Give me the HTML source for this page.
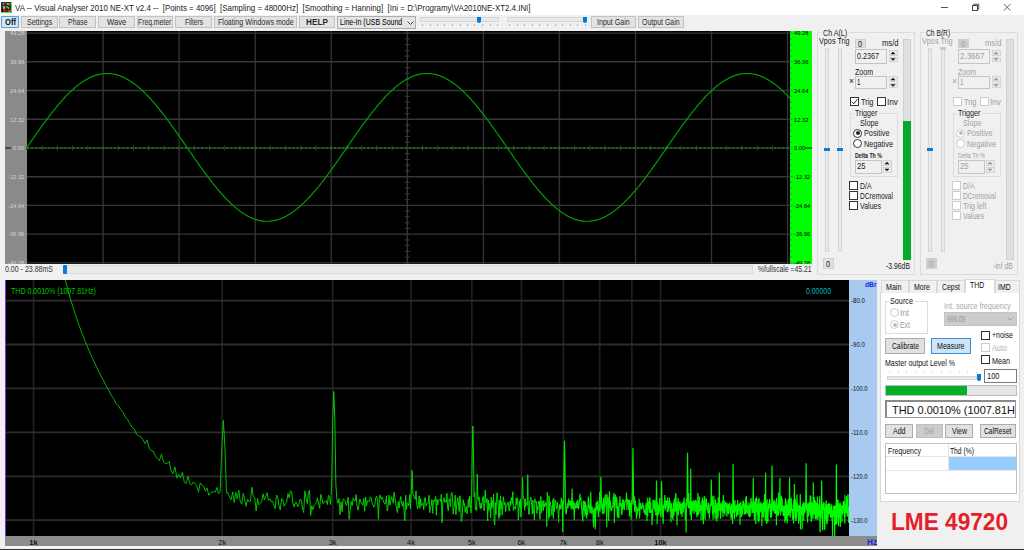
<!DOCTYPE html><html><head><meta charset="utf-8"><style>
html,body{margin:0;padding:0;}
body{width:1024px;height:550px;overflow:hidden;position:relative;background:#f0f0f0;font-family:"Liberation Sans",sans-serif;}
.t{position:absolute;white-space:pre;line-height:1;transform-origin:0 0;}
.r{position:absolute;}
svg{position:absolute;left:0;top:0;}
</style></head><body>
<div class="r" style="left:0px;top:0px;width:1024px;height:15px;background:#fff;"></div>
<div class="t" style="left:14.60px;top:4.00px;font-size:9.3px;color:#222;transform:scaleX(0.8507);">VA -- Visual Analyser 2010 NE-XT v2.4 --  [Points = 4096]  [Sampling = 48000Hz]  [Smoothing = Hanning]  [Ini = D:\Programy\VA2010NE-XT2.4.INI]</div>
<div class="r" style="left:1px;top:2px;width:11px;height:11px;background:#2e2e2e;border-right:1px solid #44ee44;border-bottom:1px solid #44ee44;box-sizing:border-box;"></div>
<div class="r" style="left:1.5px;top:2.5px;width:9.5px;height:0.5px;background:#555;"></div>
<div class="r" style="left:2.5px;top:3px;width:1.5px;height:2px;background:#4aa8b0;border-radius:40%;"></div>
<div class="r" style="left:7px;top:3px;width:1.5px;height:2px;background:#b8b020;border-radius:40%;"></div>
<div class="r" style="left:9px;top:2.5px;width:2px;height:2.0px;background:#e03030;border-radius:50%;"></div>
<div class="r" style="left:3px;top:6px;width:1.5px;height:2.5px;background:#c8c020;border-radius:40%;"></div>
<div class="r" style="left:6.3px;top:5.7px;width:1.5px;height:2.6000000000000005px;background:#40a8b0;border-radius:40%;"></div>
<div class="r" style="left:8px;top:7px;width:1px;height:1.5px;background:#b8b020;"></div>
<div class="r" style="left:1.5px;top:8.5px;width:1.5px;height:3.5px;background:#000;"></div>
<div class="r" style="left:3.3px;top:9.2px;width:2.7px;height:2.6000000000000014px;background:#c01010;border-radius:30%;"></div>
<div class="r" style="left:7.5px;top:10px;width:3.5px;height:2px;background:#e03838;border-radius:50%;"></div>
<svg width="1024" height="16" style="left:0;top:0"><rect x="972.5" y="5.5" width="5" height="5" fill="none" stroke="#444" stroke-width="1"/><path d="M973.8 5.5 V4.2 H978.8 V9.2 H977.5" fill="none" stroke="#444" stroke-width="0.9"/><path d="M1003.8 4 L1010.4 10.6 M1010.4 4 L1003.8 10.6" stroke="#555" stroke-width="0.9"/><path d="M941 7.5 H948" stroke="#555" stroke-width="1"/></svg>
<div class="r" style="left:1px;top:16px;width:18px;height:12px;box-sizing:border-box;background:#d2e6f8;border:1px solid #5a9edc;border-radius:1px;"></div>
<div class="t" style="left:4.50px;top:18.00px;font-size:8.6px;color:#111;font-weight:bold;transform:scaleX(0.8858);">Off</div>
<div class="r" style="left:21px;top:16px;width:37px;height:12px;box-sizing:border-box;background:#e3e3e3;border:1px solid #c2c2c2;"></div>
<div class="t" style="left:26.90px;top:19.00px;font-size:8.2px;color:#2a2a2a;transform:scaleX(0.8505);">Settings</div>
<div class="r" style="left:59px;top:16px;width:37px;height:12px;box-sizing:border-box;background:#e3e3e3;border:1px solid #c2c2c2;"></div>
<div class="t" style="left:67.65px;top:19.00px;font-size:8.2px;color:#2a2a2a;transform:scaleX(0.8473);">Phase</div>
<div class="r" style="left:98px;top:16px;width:37px;height:12px;box-sizing:border-box;background:#e3e3e3;border:1px solid #c2c2c2;"></div>
<div class="t" style="left:106.80px;top:19.00px;font-size:8.2px;color:#2a2a2a;transform:scaleX(0.9392);">Wave</div>
<div class="r" style="left:137px;top:16px;width:36px;height:12px;box-sizing:border-box;background:#e3e3e3;border:1px solid #c2c2c2;"></div>
<div class="t" style="left:138.35px;top:19.00px;font-size:8.2px;color:#2a2a2a;transform:scaleX(0.8304);">Freq.meter</div>
<div class="r" style="left:175px;top:16px;width:37px;height:12px;box-sizing:border-box;background:#e3e3e3;border:1px solid #c2c2c2;"></div>
<div class="t" style="left:184.50px;top:19.00px;font-size:8.2px;color:#2a2a2a;transform:scaleX(0.8064);">Filters</div>
<div class="r" style="left:214px;top:16px;width:83px;height:12px;box-sizing:border-box;background:#e3e3e3;border:1px solid #c2c2c2;"></div>
<div class="t" style="left:217.60px;top:19.00px;font-size:8.2px;color:#2a2a2a;transform:scaleX(0.8662);">Floating Windows mode</div>
<div class="r" style="left:299px;top:16px;width:36px;height:12px;box-sizing:border-box;background:#e3e3e3;border:1px solid #c2c2c2;"></div>
<div class="t" style="left:306.05px;top:19.00px;font-size:8.2px;color:#2a2a2a;font-weight:bold;">HELP</div>
<div class="r" style="left:337px;top:16px;width:79px;height:13px;box-sizing:border-box;background:#e5e5e5;border:1px solid #acacac;"></div>
<div class="t" style="left:339.70px;top:18.00px;font-size:8.6px;color:#000;transform:scaleX(0.8145);">Line-In (USB Sound</div>
<svg width="1024" height="40"><path d="M407.5 21.5 L410.5 24.5 L413.5 21.5" fill="none" stroke="#444" stroke-width="1"/></svg>
<div class="r" style="left:420px;top:17px;width:79px;height:5px;box-sizing:border-box;background:#e7eaea;border:1px solid #d6d6d6;"></div>
<div class="r" style="left:477px;top:17px;width:4px;height:6px;background:#007ad9;border-radius:0 0 2px 2px;"></div>
<div class="r" style="left:422px;top:24px;width:1px;height:2px;background:#b8b8b8;"></div>
<div class="r" style="left:430px;top:24px;width:1px;height:2px;background:#b8b8b8;"></div>
<div class="r" style="left:437px;top:24px;width:1px;height:2px;background:#b8b8b8;"></div>
<div class="r" style="left:444px;top:24px;width:1px;height:2px;background:#b8b8b8;"></div>
<div class="r" style="left:452px;top:24px;width:1px;height:2px;background:#b8b8b8;"></div>
<div class="r" style="left:460px;top:24px;width:1px;height:2px;background:#b8b8b8;"></div>
<div class="r" style="left:467px;top:24px;width:1px;height:2px;background:#b8b8b8;"></div>
<div class="r" style="left:474px;top:24px;width:1px;height:2px;background:#b8b8b8;"></div>
<div class="r" style="left:482px;top:24px;width:1px;height:2px;background:#b8b8b8;"></div>
<div class="r" style="left:490px;top:24px;width:1px;height:2px;background:#b8b8b8;"></div>
<div class="r" style="left:497px;top:24px;width:1px;height:2px;background:#b8b8b8;"></div>
<div class="r" style="left:507px;top:17px;width:80px;height:5px;box-sizing:border-box;background:#e7eaea;border:1px solid #d6d6d6;"></div>
<div class="r" style="left:583px;top:17px;width:4px;height:6px;background:#007ad9;border-radius:0 0 2px 2px;"></div>
<div class="r" style="left:509px;top:24px;width:1px;height:2px;background:#b8b8b8;"></div>
<div class="r" style="left:517px;top:24px;width:1px;height:2px;background:#b8b8b8;"></div>
<div class="r" style="left:524px;top:24px;width:1px;height:2px;background:#b8b8b8;"></div>
<div class="r" style="left:532px;top:24px;width:1px;height:2px;background:#b8b8b8;"></div>
<div class="r" style="left:539px;top:24px;width:1px;height:2px;background:#b8b8b8;"></div>
<div class="r" style="left:547px;top:24px;width:1px;height:2px;background:#b8b8b8;"></div>
<div class="r" style="left:555px;top:24px;width:1px;height:2px;background:#b8b8b8;"></div>
<div class="r" style="left:562px;top:24px;width:1px;height:2px;background:#b8b8b8;"></div>
<div class="r" style="left:570px;top:24px;width:1px;height:2px;background:#b8b8b8;"></div>
<div class="r" style="left:577px;top:24px;width:1px;height:2px;background:#b8b8b8;"></div>
<div class="r" style="left:585px;top:24px;width:1px;height:2px;background:#b8b8b8;"></div>
<div class="r" style="left:591px;top:16px;width:45px;height:12px;box-sizing:border-box;background:#e3e3e3;border:1px solid #c2c2c2;"></div>
<div class="t" style="left:597.10px;top:19.00px;font-size:8.2px;color:#2a2a2a;transform:scaleX(0.8669);">Input Gain</div>
<div class="r" style="left:638px;top:16px;width:46px;height:12px;box-sizing:border-box;background:#e3e3e3;border:1px solid #c2c2c2;"></div>
<div class="t" style="left:642.15px;top:19.00px;font-size:8.2px;color:#2a2a2a;transform:scaleX(0.8526);">Output Gain</div>
<div class="r" style="left:5px;top:31px;width:22px;height:233px;background:#8a8a8a;"></div>
<div class="r" style="left:27px;top:31px;width:763px;height:233px;background:#000;"></div>
<div class="r" style="left:790px;top:31px;width:22px;height:233px;background:#00ff00;"></div>
<svg width="1024" height="550" style="clip-path:inset(31px 212px 286px 5px)"><line x1="103.1" y1="31" x2="103.1" y2="264" stroke="#333" stroke-width="1.4"/><line x1="179.1" y1="31" x2="179.1" y2="264" stroke="#333" stroke-width="1.4"/><line x1="255.2" y1="31" x2="255.2" y2="264" stroke="#333" stroke-width="1.4"/><line x1="331.2" y1="31" x2="331.2" y2="264" stroke="#333" stroke-width="1.4"/><line x1="407.3" y1="31" x2="407.3" y2="264" stroke="#333" stroke-width="1.4"/><line x1="483.4" y1="31" x2="483.4" y2="264" stroke="#333" stroke-width="1.4"/><line x1="559.4" y1="31" x2="559.4" y2="264" stroke="#333" stroke-width="1.4"/><line x1="635.5" y1="31" x2="635.5" y2="264" stroke="#333" stroke-width="1.4"/><line x1="711.5" y1="31" x2="711.5" y2="264" stroke="#333" stroke-width="1.4"/><line x1="787.6" y1="31" x2="787.6" y2="264" stroke="#333" stroke-width="1.4"/><line x1="27" y1="33.1" x2="790" y2="33.1" stroke="#373737" stroke-width="1.4"/><line x1="27" y1="61.8" x2="790" y2="61.8" stroke="#373737" stroke-width="1.4"/><line x1="27" y1="90.5" x2="790" y2="90.5" stroke="#373737" stroke-width="1.4"/><line x1="27" y1="119.3" x2="790" y2="119.3" stroke="#373737" stroke-width="1.4"/><line x1="27" y1="148.0" x2="790" y2="148.0" stroke="#373737" stroke-width="1.4"/><line x1="27" y1="176.7" x2="790" y2="176.7" stroke="#373737" stroke-width="1.4"/><line x1="27" y1="205.4" x2="790" y2="205.4" stroke="#373737" stroke-width="1.4"/><line x1="27" y1="234.1" x2="790" y2="234.1" stroke="#373737" stroke-width="1.4"/><line x1="27" y1="262.9" x2="790" y2="262.9" stroke="#373737" stroke-width="1.4"/><line x1="27.0" y1="145.5" x2="27.0" y2="150.5" stroke="#3a3a3a" stroke-width="1"/><line x1="42.2" y1="145.5" x2="42.2" y2="150.5" stroke="#3a3a3a" stroke-width="1"/><line x1="57.4" y1="145.5" x2="57.4" y2="150.5" stroke="#3a3a3a" stroke-width="1"/><line x1="72.6" y1="145.5" x2="72.6" y2="150.5" stroke="#3a3a3a" stroke-width="1"/><line x1="87.8" y1="145.5" x2="87.8" y2="150.5" stroke="#3a3a3a" stroke-width="1"/><line x1="103.1" y1="145.5" x2="103.1" y2="150.5" stroke="#3a3a3a" stroke-width="1"/><line x1="118.3" y1="145.5" x2="118.3" y2="150.5" stroke="#3a3a3a" stroke-width="1"/><line x1="133.5" y1="145.5" x2="133.5" y2="150.5" stroke="#3a3a3a" stroke-width="1"/><line x1="148.7" y1="145.5" x2="148.7" y2="150.5" stroke="#3a3a3a" stroke-width="1"/><line x1="163.9" y1="145.5" x2="163.9" y2="150.5" stroke="#3a3a3a" stroke-width="1"/><line x1="179.1" y1="145.5" x2="179.1" y2="150.5" stroke="#3a3a3a" stroke-width="1"/><line x1="194.3" y1="145.5" x2="194.3" y2="150.5" stroke="#3a3a3a" stroke-width="1"/><line x1="209.5" y1="145.5" x2="209.5" y2="150.5" stroke="#3a3a3a" stroke-width="1"/><line x1="224.8" y1="145.5" x2="224.8" y2="150.5" stroke="#3a3a3a" stroke-width="1"/><line x1="240.0" y1="145.5" x2="240.0" y2="150.5" stroke="#3a3a3a" stroke-width="1"/><line x1="255.2" y1="145.5" x2="255.2" y2="150.5" stroke="#3a3a3a" stroke-width="1"/><line x1="270.4" y1="145.5" x2="270.4" y2="150.5" stroke="#3a3a3a" stroke-width="1"/><line x1="285.6" y1="145.5" x2="285.6" y2="150.5" stroke="#3a3a3a" stroke-width="1"/><line x1="300.8" y1="145.5" x2="300.8" y2="150.5" stroke="#3a3a3a" stroke-width="1"/><line x1="316.0" y1="145.5" x2="316.0" y2="150.5" stroke="#3a3a3a" stroke-width="1"/><line x1="331.2" y1="145.5" x2="331.2" y2="150.5" stroke="#3a3a3a" stroke-width="1"/><line x1="346.5" y1="145.5" x2="346.5" y2="150.5" stroke="#3a3a3a" stroke-width="1"/><line x1="361.7" y1="145.5" x2="361.7" y2="150.5" stroke="#3a3a3a" stroke-width="1"/><line x1="376.9" y1="145.5" x2="376.9" y2="150.5" stroke="#3a3a3a" stroke-width="1"/><line x1="392.1" y1="145.5" x2="392.1" y2="150.5" stroke="#3a3a3a" stroke-width="1"/><line x1="407.3" y1="145.5" x2="407.3" y2="150.5" stroke="#3a3a3a" stroke-width="1"/><line x1="422.5" y1="145.5" x2="422.5" y2="150.5" stroke="#3a3a3a" stroke-width="1"/><line x1="437.7" y1="145.5" x2="437.7" y2="150.5" stroke="#3a3a3a" stroke-width="1"/><line x1="452.9" y1="145.5" x2="452.9" y2="150.5" stroke="#3a3a3a" stroke-width="1"/><line x1="468.1" y1="145.5" x2="468.1" y2="150.5" stroke="#3a3a3a" stroke-width="1"/><line x1="483.4" y1="145.5" x2="483.4" y2="150.5" stroke="#3a3a3a" stroke-width="1"/><line x1="498.6" y1="145.5" x2="498.6" y2="150.5" stroke="#3a3a3a" stroke-width="1"/><line x1="513.8" y1="145.5" x2="513.8" y2="150.5" stroke="#3a3a3a" stroke-width="1"/><line x1="529.0" y1="145.5" x2="529.0" y2="150.5" stroke="#3a3a3a" stroke-width="1"/><line x1="544.2" y1="145.5" x2="544.2" y2="150.5" stroke="#3a3a3a" stroke-width="1"/><line x1="559.4" y1="145.5" x2="559.4" y2="150.5" stroke="#3a3a3a" stroke-width="1"/><line x1="574.6" y1="145.5" x2="574.6" y2="150.5" stroke="#3a3a3a" stroke-width="1"/><line x1="589.8" y1="145.5" x2="589.8" y2="150.5" stroke="#3a3a3a" stroke-width="1"/><line x1="605.1" y1="145.5" x2="605.1" y2="150.5" stroke="#3a3a3a" stroke-width="1"/><line x1="620.3" y1="145.5" x2="620.3" y2="150.5" stroke="#3a3a3a" stroke-width="1"/><line x1="635.5" y1="145.5" x2="635.5" y2="150.5" stroke="#3a3a3a" stroke-width="1"/><line x1="650.7" y1="145.5" x2="650.7" y2="150.5" stroke="#3a3a3a" stroke-width="1"/><line x1="665.9" y1="145.5" x2="665.9" y2="150.5" stroke="#3a3a3a" stroke-width="1"/><line x1="681.1" y1="145.5" x2="681.1" y2="150.5" stroke="#3a3a3a" stroke-width="1"/><line x1="696.3" y1="145.5" x2="696.3" y2="150.5" stroke="#3a3a3a" stroke-width="1"/><line x1="711.5" y1="145.5" x2="711.5" y2="150.5" stroke="#3a3a3a" stroke-width="1"/><line x1="726.8" y1="145.5" x2="726.8" y2="150.5" stroke="#3a3a3a" stroke-width="1"/><line x1="742.0" y1="145.5" x2="742.0" y2="150.5" stroke="#3a3a3a" stroke-width="1"/><line x1="757.2" y1="145.5" x2="757.2" y2="150.5" stroke="#3a3a3a" stroke-width="1"/><line x1="772.4" y1="145.5" x2="772.4" y2="150.5" stroke="#3a3a3a" stroke-width="1"/><line x1="787.6" y1="145.5" x2="787.6" y2="150.5" stroke="#3a3a3a" stroke-width="1"/><line x1="404.8" y1="33.1" x2="409.8" y2="33.1" stroke="#3a3a3a" stroke-width="1"/><line x1="404.8" y1="38.8" x2="409.8" y2="38.8" stroke="#3a3a3a" stroke-width="1"/><line x1="404.8" y1="44.6" x2="409.8" y2="44.6" stroke="#3a3a3a" stroke-width="1"/><line x1="404.8" y1="50.3" x2="409.8" y2="50.3" stroke="#3a3a3a" stroke-width="1"/><line x1="404.8" y1="56.1" x2="409.8" y2="56.1" stroke="#3a3a3a" stroke-width="1"/><line x1="404.8" y1="61.8" x2="409.8" y2="61.8" stroke="#3a3a3a" stroke-width="1"/><line x1="404.8" y1="67.6" x2="409.8" y2="67.6" stroke="#3a3a3a" stroke-width="1"/><line x1="404.8" y1="73.3" x2="409.8" y2="73.3" stroke="#3a3a3a" stroke-width="1"/><line x1="404.8" y1="79.1" x2="409.8" y2="79.1" stroke="#3a3a3a" stroke-width="1"/><line x1="404.8" y1="84.8" x2="409.8" y2="84.8" stroke="#3a3a3a" stroke-width="1"/><line x1="404.8" y1="90.5" x2="409.8" y2="90.5" stroke="#3a3a3a" stroke-width="1"/><line x1="404.8" y1="96.3" x2="409.8" y2="96.3" stroke="#3a3a3a" stroke-width="1"/><line x1="404.8" y1="102.0" x2="409.8" y2="102.0" stroke="#3a3a3a" stroke-width="1"/><line x1="404.8" y1="107.8" x2="409.8" y2="107.8" stroke="#3a3a3a" stroke-width="1"/><line x1="404.8" y1="113.5" x2="409.8" y2="113.5" stroke="#3a3a3a" stroke-width="1"/><line x1="404.8" y1="119.3" x2="409.8" y2="119.3" stroke="#3a3a3a" stroke-width="1"/><line x1="404.8" y1="125.0" x2="409.8" y2="125.0" stroke="#3a3a3a" stroke-width="1"/><line x1="404.8" y1="130.7" x2="409.8" y2="130.7" stroke="#3a3a3a" stroke-width="1"/><line x1="404.8" y1="136.5" x2="409.8" y2="136.5" stroke="#3a3a3a" stroke-width="1"/><line x1="404.8" y1="142.2" x2="409.8" y2="142.2" stroke="#3a3a3a" stroke-width="1"/><line x1="404.8" y1="148.0" x2="409.8" y2="148.0" stroke="#3a3a3a" stroke-width="1"/><line x1="404.8" y1="153.7" x2="409.8" y2="153.7" stroke="#3a3a3a" stroke-width="1"/><line x1="404.8" y1="159.5" x2="409.8" y2="159.5" stroke="#3a3a3a" stroke-width="1"/><line x1="404.8" y1="165.2" x2="409.8" y2="165.2" stroke="#3a3a3a" stroke-width="1"/><line x1="404.8" y1="171.0" x2="409.8" y2="171.0" stroke="#3a3a3a" stroke-width="1"/><line x1="404.8" y1="176.7" x2="409.8" y2="176.7" stroke="#3a3a3a" stroke-width="1"/><line x1="404.8" y1="182.4" x2="409.8" y2="182.4" stroke="#3a3a3a" stroke-width="1"/><line x1="404.8" y1="188.2" x2="409.8" y2="188.2" stroke="#3a3a3a" stroke-width="1"/><line x1="404.8" y1="193.9" x2="409.8" y2="193.9" stroke="#3a3a3a" stroke-width="1"/><line x1="404.8" y1="199.7" x2="409.8" y2="199.7" stroke="#3a3a3a" stroke-width="1"/><line x1="404.8" y1="205.4" x2="409.8" y2="205.4" stroke="#3a3a3a" stroke-width="1"/><line x1="404.8" y1="211.2" x2="409.8" y2="211.2" stroke="#3a3a3a" stroke-width="1"/><line x1="404.8" y1="216.9" x2="409.8" y2="216.9" stroke="#3a3a3a" stroke-width="1"/><line x1="404.8" y1="222.7" x2="409.8" y2="222.7" stroke="#3a3a3a" stroke-width="1"/><line x1="404.8" y1="228.4" x2="409.8" y2="228.4" stroke="#3a3a3a" stroke-width="1"/><line x1="404.8" y1="234.1" x2="409.8" y2="234.1" stroke="#3a3a3a" stroke-width="1"/><line x1="404.8" y1="239.9" x2="409.8" y2="239.9" stroke="#3a3a3a" stroke-width="1"/><line x1="404.8" y1="245.6" x2="409.8" y2="245.6" stroke="#3a3a3a" stroke-width="1"/><line x1="404.8" y1="251.4" x2="409.8" y2="251.4" stroke="#3a3a3a" stroke-width="1"/><line x1="404.8" y1="257.1" x2="409.8" y2="257.1" stroke="#3a3a3a" stroke-width="1"/><line x1="404.8" y1="262.9" x2="409.8" y2="262.9" stroke="#3a3a3a" stroke-width="1"/><line x1="27" y1="148.0" x2="790" y2="148.0" stroke="#00b000" stroke-width="1.0" stroke-dasharray="2 2.15"/><line x1="790" y1="33.1" x2="793" y2="33.1" stroke="#30a030" stroke-width="1"/><line x1="790" y1="38.8" x2="792" y2="38.8" stroke="#30a030" stroke-width="1"/><line x1="790" y1="44.6" x2="792" y2="44.6" stroke="#30a030" stroke-width="1"/><line x1="790" y1="50.3" x2="792" y2="50.3" stroke="#30a030" stroke-width="1"/><line x1="790" y1="56.1" x2="792" y2="56.1" stroke="#30a030" stroke-width="1"/><line x1="790" y1="61.8" x2="793" y2="61.8" stroke="#30a030" stroke-width="1"/><line x1="790" y1="67.6" x2="792" y2="67.6" stroke="#30a030" stroke-width="1"/><line x1="790" y1="73.3" x2="792" y2="73.3" stroke="#30a030" stroke-width="1"/><line x1="790" y1="79.1" x2="792" y2="79.1" stroke="#30a030" stroke-width="1"/><line x1="790" y1="84.8" x2="792" y2="84.8" stroke="#30a030" stroke-width="1"/><line x1="790" y1="90.5" x2="793" y2="90.5" stroke="#30a030" stroke-width="1"/><line x1="790" y1="96.3" x2="792" y2="96.3" stroke="#30a030" stroke-width="1"/><line x1="790" y1="102.0" x2="792" y2="102.0" stroke="#30a030" stroke-width="1"/><line x1="790" y1="107.8" x2="792" y2="107.8" stroke="#30a030" stroke-width="1"/><line x1="790" y1="113.5" x2="792" y2="113.5" stroke="#30a030" stroke-width="1"/><line x1="790" y1="119.3" x2="793" y2="119.3" stroke="#30a030" stroke-width="1"/><line x1="790" y1="125.0" x2="792" y2="125.0" stroke="#30a030" stroke-width="1"/><line x1="790" y1="130.7" x2="792" y2="130.7" stroke="#30a030" stroke-width="1"/><line x1="790" y1="136.5" x2="792" y2="136.5" stroke="#30a030" stroke-width="1"/><line x1="790" y1="142.2" x2="792" y2="142.2" stroke="#30a030" stroke-width="1"/><line x1="790" y1="148.0" x2="793" y2="148.0" stroke="#30a030" stroke-width="1"/><line x1="790" y1="153.7" x2="792" y2="153.7" stroke="#30a030" stroke-width="1"/><line x1="790" y1="159.5" x2="792" y2="159.5" stroke="#30a030" stroke-width="1"/><line x1="790" y1="165.2" x2="792" y2="165.2" stroke="#30a030" stroke-width="1"/><line x1="790" y1="171.0" x2="792" y2="171.0" stroke="#30a030" stroke-width="1"/><line x1="790" y1="176.7" x2="793" y2="176.7" stroke="#30a030" stroke-width="1"/><line x1="790" y1="182.4" x2="792" y2="182.4" stroke="#30a030" stroke-width="1"/><line x1="790" y1="188.2" x2="792" y2="188.2" stroke="#30a030" stroke-width="1"/><line x1="790" y1="193.9" x2="792" y2="193.9" stroke="#30a030" stroke-width="1"/><line x1="790" y1="199.7" x2="792" y2="199.7" stroke="#30a030" stroke-width="1"/><line x1="790" y1="205.4" x2="793" y2="205.4" stroke="#30a030" stroke-width="1"/><line x1="790" y1="211.2" x2="792" y2="211.2" stroke="#30a030" stroke-width="1"/><line x1="790" y1="216.9" x2="792" y2="216.9" stroke="#30a030" stroke-width="1"/><line x1="790" y1="222.7" x2="792" y2="222.7" stroke="#30a030" stroke-width="1"/><line x1="790" y1="228.4" x2="792" y2="228.4" stroke="#30a030" stroke-width="1"/><line x1="790" y1="234.1" x2="793" y2="234.1" stroke="#30a030" stroke-width="1"/><line x1="790" y1="239.9" x2="792" y2="239.9" stroke="#30a030" stroke-width="1"/><line x1="790" y1="245.6" x2="792" y2="245.6" stroke="#30a030" stroke-width="1"/><line x1="790" y1="251.4" x2="792" y2="251.4" stroke="#30a030" stroke-width="1"/><line x1="790" y1="257.1" x2="792" y2="257.1" stroke="#30a030" stroke-width="1"/><line x1="790" y1="262.9" x2="793" y2="262.9" stroke="#30a030" stroke-width="1"/><line x1="5" y1="148.0" x2="11" y2="148.0" stroke="#111" stroke-width="1"/><line x1="805" y1="148.0" x2="812" y2="148.0" stroke="#111" stroke-width="1"/><polyline points="27.0,147.40 28.0,145.95 29.0,144.50 30.0,143.05 31.0,141.60 32.0,140.16 33.0,138.71 34.0,137.27 35.0,135.84 36.0,134.41 37.0,132.98 38.0,131.56 39.0,130.15 40.0,128.74 41.0,127.34 42.0,125.95 43.0,124.56 44.0,123.19 45.0,121.82 46.0,120.47 47.0,119.12 48.0,117.78 49.0,116.46 50.0,115.15 51.0,113.85 52.0,112.56 53.0,111.29 54.0,110.03 55.0,108.79 56.0,107.56 57.0,106.34 58.0,105.14 59.0,103.96 60.0,102.80 61.0,101.65 62.0,100.52 63.0,99.41 64.0,98.31 65.0,97.24 66.0,96.18 67.0,95.14 68.0,94.13 69.0,93.13 70.0,92.16 71.0,91.21 72.0,90.27 73.0,89.37 74.0,88.48 75.0,87.61 76.0,86.77 77.0,85.95 78.0,85.16 79.0,84.39 80.0,83.64 81.0,82.92 82.0,82.23 83.0,81.55 84.0,80.91 85.0,80.29 86.0,79.69 87.0,79.13 88.0,78.58 89.0,78.07 90.0,77.58 91.0,77.12 92.0,76.68 93.0,76.27 94.0,75.89 95.0,75.54 96.0,75.22 97.0,74.92 98.0,74.65 99.0,74.41 100.0,74.20 101.0,74.01 102.0,73.86 103.0,73.73 104.0,73.63 105.0,73.56 106.0,73.51 107.0,73.50 108.0,73.51 109.0,73.56 110.0,73.63 111.0,73.73 112.0,73.86 113.0,74.01 114.0,74.20 115.0,74.41 116.0,74.65 117.0,74.92 118.0,75.22 119.0,75.54 120.0,75.89 121.0,76.27 122.0,76.68 123.0,77.12 124.0,77.58 125.0,78.07 126.0,78.58 127.0,79.13 128.0,79.69 129.0,80.29 130.0,80.91 131.0,81.55 132.0,82.23 133.0,82.92 134.0,83.64 135.0,84.39 136.0,85.16 137.0,85.95 138.0,86.77 139.0,87.61 140.0,88.48 141.0,89.37 142.0,90.27 143.0,91.21 144.0,92.16 145.0,93.13 146.0,94.13 147.0,95.14 148.0,96.18 149.0,97.24 150.0,98.31 151.0,99.41 152.0,100.52 153.0,101.65 154.0,102.80 155.0,103.96 156.0,105.14 157.0,106.34 158.0,107.56 159.0,108.79 160.0,110.03 161.0,111.29 162.0,112.56 163.0,113.85 164.0,115.15 165.0,116.46 166.0,117.78 167.0,119.12 168.0,120.47 169.0,121.82 170.0,123.19 171.0,124.56 172.0,125.95 173.0,127.34 174.0,128.74 175.0,130.15 176.0,131.56 177.0,132.98 178.0,134.41 179.0,135.84 180.0,137.27 181.0,138.71 182.0,140.16 183.0,141.60 184.0,143.05 185.0,144.50 186.0,145.95 187.0,147.40 188.0,148.85 189.0,150.30 190.0,151.75 191.0,153.20 192.0,154.64 193.0,156.09 194.0,157.53 195.0,158.96 196.0,160.39 197.0,161.82 198.0,163.24 199.0,164.65 200.0,166.06 201.0,167.46 202.0,168.85 203.0,170.24 204.0,171.61 205.0,172.98 206.0,174.33 207.0,175.68 208.0,177.02 209.0,178.34 210.0,179.65 211.0,180.95 212.0,182.24 213.0,183.51 214.0,184.77 215.0,186.01 216.0,187.24 217.0,188.46 218.0,189.66 219.0,190.84 220.0,192.00 221.0,193.15 222.0,194.28 223.0,195.39 224.0,196.49 225.0,197.56 226.0,198.62 227.0,199.66 228.0,200.67 229.0,201.67 230.0,202.64 231.0,203.59 232.0,204.53 233.0,205.43 234.0,206.32 235.0,207.19 236.0,208.03 237.0,208.85 238.0,209.64 239.0,210.41 240.0,211.16 241.0,211.88 242.0,212.57 243.0,213.25 244.0,213.89 245.0,214.51 246.0,215.11 247.0,215.67 248.0,216.22 249.0,216.73 250.0,217.22 251.0,217.68 252.0,218.12 253.0,218.53 254.0,218.91 255.0,219.26 256.0,219.58 257.0,219.88 258.0,220.15 259.0,220.39 260.0,220.60 261.0,220.79 262.0,220.94 263.0,221.07 264.0,221.17 265.0,221.24 266.0,221.29 267.0,221.30 268.0,221.29 269.0,221.24 270.0,221.17 271.0,221.07 272.0,220.94 273.0,220.79 274.0,220.60 275.0,220.39 276.0,220.15 277.0,219.88 278.0,219.58 279.0,219.26 280.0,218.91 281.0,218.53 282.0,218.12 283.0,217.68 284.0,217.22 285.0,216.73 286.0,216.22 287.0,215.67 288.0,215.11 289.0,214.51 290.0,213.89 291.0,213.25 292.0,212.57 293.0,211.88 294.0,211.16 295.0,210.41 296.0,209.64 297.0,208.85 298.0,208.03 299.0,207.19 300.0,206.32 301.0,205.43 302.0,204.53 303.0,203.59 304.0,202.64 305.0,201.67 306.0,200.67 307.0,199.66 308.0,198.62 309.0,197.56 310.0,196.49 311.0,195.39 312.0,194.28 313.0,193.15 314.0,192.00 315.0,190.84 316.0,189.66 317.0,188.46 318.0,187.24 319.0,186.01 320.0,184.77 321.0,183.51 322.0,182.24 323.0,180.95 324.0,179.65 325.0,178.34 326.0,177.02 327.0,175.68 328.0,174.33 329.0,172.98 330.0,171.61 331.0,170.24 332.0,168.85 333.0,167.46 334.0,166.06 335.0,164.65 336.0,163.24 337.0,161.82 338.0,160.39 339.0,158.96 340.0,157.53 341.0,156.09 342.0,154.64 343.0,153.20 344.0,151.75 345.0,150.30 346.0,148.85 347.0,147.40 348.0,145.95 349.0,144.50 350.0,143.05 351.0,141.60 352.0,140.16 353.0,138.71 354.0,137.27 355.0,135.84 356.0,134.41 357.0,132.98 358.0,131.56 359.0,130.15 360.0,128.74 361.0,127.34 362.0,125.95 363.0,124.56 364.0,123.19 365.0,121.82 366.0,120.47 367.0,119.12 368.0,117.78 369.0,116.46 370.0,115.15 371.0,113.85 372.0,112.56 373.0,111.29 374.0,110.03 375.0,108.79 376.0,107.56 377.0,106.34 378.0,105.14 379.0,103.96 380.0,102.80 381.0,101.65 382.0,100.52 383.0,99.41 384.0,98.31 385.0,97.24 386.0,96.18 387.0,95.14 388.0,94.13 389.0,93.13 390.0,92.16 391.0,91.21 392.0,90.27 393.0,89.37 394.0,88.48 395.0,87.61 396.0,86.77 397.0,85.95 398.0,85.16 399.0,84.39 400.0,83.64 401.0,82.92 402.0,82.23 403.0,81.55 404.0,80.91 405.0,80.29 406.0,79.69 407.0,79.13 408.0,78.58 409.0,78.07 410.0,77.58 411.0,77.12 412.0,76.68 413.0,76.27 414.0,75.89 415.0,75.54 416.0,75.22 417.0,74.92 418.0,74.65 419.0,74.41 420.0,74.20 421.0,74.01 422.0,73.86 423.0,73.73 424.0,73.63 425.0,73.56 426.0,73.51 427.0,73.50 428.0,73.51 429.0,73.56 430.0,73.63 431.0,73.73 432.0,73.86 433.0,74.01 434.0,74.20 435.0,74.41 436.0,74.65 437.0,74.92 438.0,75.22 439.0,75.54 440.0,75.89 441.0,76.27 442.0,76.68 443.0,77.12 444.0,77.58 445.0,78.07 446.0,78.58 447.0,79.13 448.0,79.69 449.0,80.29 450.0,80.91 451.0,81.55 452.0,82.23 453.0,82.92 454.0,83.64 455.0,84.39 456.0,85.16 457.0,85.95 458.0,86.77 459.0,87.61 460.0,88.48 461.0,89.37 462.0,90.27 463.0,91.21 464.0,92.16 465.0,93.13 466.0,94.13 467.0,95.14 468.0,96.18 469.0,97.24 470.0,98.31 471.0,99.41 472.0,100.52 473.0,101.65 474.0,102.80 475.0,103.96 476.0,105.14 477.0,106.34 478.0,107.56 479.0,108.79 480.0,110.03 481.0,111.29 482.0,112.56 483.0,113.85 484.0,115.15 485.0,116.46 486.0,117.78 487.0,119.12 488.0,120.47 489.0,121.82 490.0,123.19 491.0,124.56 492.0,125.95 493.0,127.34 494.0,128.74 495.0,130.15 496.0,131.56 497.0,132.98 498.0,134.41 499.0,135.84 500.0,137.27 501.0,138.71 502.0,140.16 503.0,141.60 504.0,143.05 505.0,144.50 506.0,145.95 507.0,147.40 508.0,148.85 509.0,150.30 510.0,151.75 511.0,153.20 512.0,154.64 513.0,156.09 514.0,157.53 515.0,158.96 516.0,160.39 517.0,161.82 518.0,163.24 519.0,164.65 520.0,166.06 521.0,167.46 522.0,168.85 523.0,170.24 524.0,171.61 525.0,172.98 526.0,174.33 527.0,175.68 528.0,177.02 529.0,178.34 530.0,179.65 531.0,180.95 532.0,182.24 533.0,183.51 534.0,184.77 535.0,186.01 536.0,187.24 537.0,188.46 538.0,189.66 539.0,190.84 540.0,192.00 541.0,193.15 542.0,194.28 543.0,195.39 544.0,196.49 545.0,197.56 546.0,198.62 547.0,199.66 548.0,200.67 549.0,201.67 550.0,202.64 551.0,203.59 552.0,204.53 553.0,205.43 554.0,206.32 555.0,207.19 556.0,208.03 557.0,208.85 558.0,209.64 559.0,210.41 560.0,211.16 561.0,211.88 562.0,212.57 563.0,213.25 564.0,213.89 565.0,214.51 566.0,215.11 567.0,215.67 568.0,216.22 569.0,216.73 570.0,217.22 571.0,217.68 572.0,218.12 573.0,218.53 574.0,218.91 575.0,219.26 576.0,219.58 577.0,219.88 578.0,220.15 579.0,220.39 580.0,220.60 581.0,220.79 582.0,220.94 583.0,221.07 584.0,221.17 585.0,221.24 586.0,221.29 587.0,221.30 588.0,221.29 589.0,221.24 590.0,221.17 591.0,221.07 592.0,220.94 593.0,220.79 594.0,220.60 595.0,220.39 596.0,220.15 597.0,219.88 598.0,219.58 599.0,219.26 600.0,218.91 601.0,218.53 602.0,218.12 603.0,217.68 604.0,217.22 605.0,216.73 606.0,216.22 607.0,215.67 608.0,215.11 609.0,214.51 610.0,213.89 611.0,213.25 612.0,212.57 613.0,211.88 614.0,211.16 615.0,210.41 616.0,209.64 617.0,208.85 618.0,208.03 619.0,207.19 620.0,206.32 621.0,205.43 622.0,204.53 623.0,203.59 624.0,202.64 625.0,201.67 626.0,200.67 627.0,199.66 628.0,198.62 629.0,197.56 630.0,196.49 631.0,195.39 632.0,194.28 633.0,193.15 634.0,192.00 635.0,190.84 636.0,189.66 637.0,188.46 638.0,187.24 639.0,186.01 640.0,184.77 641.0,183.51 642.0,182.24 643.0,180.95 644.0,179.65 645.0,178.34 646.0,177.02 647.0,175.68 648.0,174.33 649.0,172.98 650.0,171.61 651.0,170.24 652.0,168.85 653.0,167.46 654.0,166.06 655.0,164.65 656.0,163.24 657.0,161.82 658.0,160.39 659.0,158.96 660.0,157.53 661.0,156.09 662.0,154.64 663.0,153.20 664.0,151.75 665.0,150.30 666.0,148.85 667.0,147.40 668.0,145.95 669.0,144.50 670.0,143.05 671.0,141.60 672.0,140.16 673.0,138.71 674.0,137.27 675.0,135.84 676.0,134.41 677.0,132.98 678.0,131.56 679.0,130.15 680.0,128.74 681.0,127.34 682.0,125.95 683.0,124.56 684.0,123.19 685.0,121.82 686.0,120.47 687.0,119.12 688.0,117.78 689.0,116.46 690.0,115.15 691.0,113.85 692.0,112.56 693.0,111.29 694.0,110.03 695.0,108.79 696.0,107.56 697.0,106.34 698.0,105.14 699.0,103.96 700.0,102.80 701.0,101.65 702.0,100.52 703.0,99.41 704.0,98.31 705.0,97.24 706.0,96.18 707.0,95.14 708.0,94.13 709.0,93.13 710.0,92.16 711.0,91.21 712.0,90.27 713.0,89.37 714.0,88.48 715.0,87.61 716.0,86.77 717.0,85.95 718.0,85.16 719.0,84.39 720.0,83.64 721.0,82.92 722.0,82.23 723.0,81.55 724.0,80.91 725.0,80.29 726.0,79.69 727.0,79.13 728.0,78.58 729.0,78.07 730.0,77.58 731.0,77.12 732.0,76.68 733.0,76.27 734.0,75.89 735.0,75.54 736.0,75.22 737.0,74.92 738.0,74.65 739.0,74.41 740.0,74.20 741.0,74.01 742.0,73.86 743.0,73.73 744.0,73.63 745.0,73.56 746.0,73.51 747.0,73.50 748.0,73.51 749.0,73.56 750.0,73.63 751.0,73.73 752.0,73.86 753.0,74.01 754.0,74.20 755.0,74.41 756.0,74.65 757.0,74.92 758.0,75.22 759.0,75.54 760.0,75.89 761.0,76.27 762.0,76.68 763.0,77.12 764.0,77.58 765.0,78.07 766.0,78.58 767.0,79.13 768.0,79.69 769.0,80.29 770.0,80.91 771.0,81.55 772.0,82.23 773.0,82.92 774.0,83.64 775.0,84.39 776.0,85.16 777.0,85.95 778.0,86.77 779.0,87.61 780.0,88.48 781.0,89.37 782.0,90.27 783.0,91.21 784.0,92.16 785.0,93.13 786.0,94.13 787.0,95.14 788.0,96.18 789.0,97.24 790.0,98.31" fill="none" stroke="#00a400" stroke-width="1.15"/></svg>
<div style="position:absolute;left:0;top:0;width:1024px;height:550px;clip-path:inset(31px 0 286px 0)">
<div class="t" style="left:9.87px;top:30.00px;font-size:6.2px;color:#d4d4d4;transform:scaleX(0.9300);">49.28</div>
<div class="t" style="left:794.00px;top:30.00px;font-size:6.2px;color:#000;transform:scaleX(0.9300);">49.28</div>
<div class="t" style="left:9.87px;top:59.00px;font-size:6.2px;color:#d4d4d4;transform:scaleX(0.9300);">36.96</div>
<div class="t" style="left:794.00px;top:59.00px;font-size:6.2px;color:#000;transform:scaleX(0.9300);">36.96</div>
<div class="t" style="left:9.87px;top:88.00px;font-size:6.2px;color:#d4d4d4;transform:scaleX(0.9300);">24.64</div>
<div class="t" style="left:794.00px;top:88.00px;font-size:6.2px;color:#000;transform:scaleX(0.9300);">24.64</div>
<div class="t" style="left:9.87px;top:117.00px;font-size:6.2px;color:#d4d4d4;transform:scaleX(0.9300);">12.32</div>
<div class="t" style="left:794.00px;top:117.00px;font-size:6.2px;color:#000;transform:scaleX(0.9300);">12.32</div>
<div class="t" style="left:13.08px;top:145.00px;font-size:6.2px;color:#d4d4d4;transform:scaleX(0.9300);">0.00</div>
<div class="t" style="left:794.00px;top:145.00px;font-size:6.2px;color:#000;transform:scaleX(0.9300);">0.00</div>
<div class="t" style="left:7.95px;top:174.00px;font-size:6.2px;color:#d4d4d4;transform:scaleX(0.9300);">-12.32</div>
<div class="t" style="left:794.00px;top:174.00px;font-size:6.2px;color:#000;transform:scaleX(0.9300);">-12.32</div>
<div class="t" style="left:7.95px;top:203.00px;font-size:6.2px;color:#d4d4d4;transform:scaleX(0.9300);">-24.64</div>
<div class="t" style="left:794.00px;top:203.00px;font-size:6.2px;color:#000;transform:scaleX(0.9300);">-24.64</div>
<div class="t" style="left:7.95px;top:231.00px;font-size:6.2px;color:#d4d4d4;transform:scaleX(0.9300);">-36.96</div>
<div class="t" style="left:794.00px;top:231.00px;font-size:6.2px;color:#000;transform:scaleX(0.9300);">-36.96</div>
<div class="t" style="left:7.95px;top:260.00px;font-size:6.2px;color:#d4d4d4;transform:scaleX(0.9300);">-49.28</div>
<div class="t" style="left:794.00px;top:260.00px;font-size:6.2px;color:#000;transform:scaleX(0.9300);">-49.28</div>
</div>
<div class="t" style="left:5.20px;top:265.00px;font-size:8.6px;color:#333;transform:scaleX(0.8163);">0.00 - 23.88mS</div>
<div class="r" style="left:63px;top:265px;width:690px;height:9px;box-sizing:border-box;background:#e7eaea;border:1px solid #dadada;"></div>
<div class="r" style="left:63px;top:265px;width:4px;height:9px;background:#0a7ad6;border-radius:1px;"></div>
<div class="t" style="left:758.00px;top:265.00px;font-size:8.6px;color:#333;transform:scaleX(0.7908);">%fullscale =45.21</div>
<div class="r" style="left:5px;top:280px;width:844px;height:256px;background:#000;"></div>
<div class="r" style="left:849px;top:280px;width:28px;height:256px;background:#a8caf0;"></div>
<div class="r" style="left:5px;top:536px;width:872px;height:10px;background:#8c8c8c;"></div>
<div class="r" style="left:5px;top:546px;width:872px;height:3px;background:#f4f4f4;"></div>
<div class="r" style="left:0px;top:549px;width:1024px;height:1px;background:#333;"></div>
<div class="r" style="left:5px;top:280px;width:1px;height:256px;background:#8a2be2;"></div>
<svg width="1024" height="550" style="clip-path:inset(280px 175px 14px 6px)"><line x1="33.5" y1="280" x2="33.5" y2="536" stroke="#202020" stroke-width="1.7"/><line x1="222.2" y1="280" x2="222.2" y2="536" stroke="#202020" stroke-width="1.7"/><line x1="332.7" y1="280" x2="332.7" y2="536" stroke="#202020" stroke-width="1.7"/><line x1="411.0" y1="280" x2="411.0" y2="536" stroke="#202020" stroke-width="1.7"/><line x1="471.8" y1="280" x2="471.8" y2="536" stroke="#202020" stroke-width="1.7"/><line x1="521.4" y1="280" x2="521.4" y2="536" stroke="#202020" stroke-width="1.7"/><line x1="563.4" y1="280" x2="563.4" y2="536" stroke="#202020" stroke-width="1.7"/><line x1="599.7" y1="280" x2="599.7" y2="536" stroke="#202020" stroke-width="1.7"/><line x1="631.8" y1="280" x2="631.8" y2="536" stroke="#202020" stroke-width="1.7"/><line x1="660.5" y1="280" x2="660.5" y2="536" stroke="#202020" stroke-width="1.7"/><line x1="5" y1="300.6" x2="849" y2="300.6" stroke="#2c2c2c" stroke-width="1.8"/><line x1="5" y1="344.5" x2="849" y2="344.5" stroke="#2c2c2c" stroke-width="1.8"/><line x1="5" y1="388.4" x2="849" y2="388.4" stroke="#2c2c2c" stroke-width="1.8"/><line x1="5" y1="432.4" x2="849" y2="432.4" stroke="#2c2c2c" stroke-width="1.8"/><line x1="5" y1="476.3" x2="849" y2="476.3" stroke="#2c2c2c" stroke-width="1.8"/><line x1="5" y1="520.2" x2="849" y2="520.2" stroke="#2c2c2c" stroke-width="1.8"/><defs><linearGradient id="sg" gradientUnits="userSpaceOnUse" x1="5" y1="0" x2="849" y2="0"><stop offset="0" stop-color="#00b000"/><stop offset="0.45" stop-color="#00d800"/><stop offset="1" stop-color="#00ff00"/></linearGradient></defs><polyline points="-63.41,386.39 -58.91,381.85 -54.48,377.20 -50.12,372.33 -45.84,367.24 -41.61,361.92 -37.46,356.34 -33.36,350.47 -29.33,344.29 -25.35,337.75 -21.43,330.82 -17.57,323.43 -13.76,315.53 -10.01,307.05 -6.30,297.89 -2.65,287.94 0.96,277.03 4.52,264.97 8.03,251.49 11.50,236.21 14.93,218.57 18.31,197.70 21.65,172.16 24.95,139.24 28.21,92.84 31.43,74.68 34.62,-50.00 37.77,74.68 40.88,92.84 43.96,139.24 47.00,172.16 50.01,197.70 52.98,218.57 55.93,236.21 58.84,251.49 61.72,264.97 64.57,277.03 67.39,287.94 70.19,297.89 72.95,307.05 75.69,315.53 78.40,323.43 81.08,330.81 83.74,337.75 86.37,344.29 88.97,350.47 91.56,356.35 94.11,361.93 96.65,367.24 99.15,372.31 101.64,377.17 104.11,381.85 106.55,386.38 108.97,390.50 111.37,395.46 113.75,398.86 116.10,403.92 118.44,405.58 120.76,409.72 123.06,412.19 125.34,417.16 127.59,419.56 129.84,423.75 132.06,427.41 134.26,428.82 136.45,434.17 138.62,435.72 140.77,436.58 142.91,439.63 145.03,443.78 147.13,440.15 149.22,448.40 151.29,450.87 153.34,451.26 155.38,455.93 157.41,458.49 159.42,460.65 161.41,454.34 163.39,461.27 165.36,463.83 167.31,463.21 169.25,461.62 171.17,471.38 173.08,473.66 174.98,466.89 176.87,478.17 178.74,474.50 180.60,477.96 182.44,472.21 184.28,482.06 186.10,483.63 187.91,476.27 189.70,483.63 191.49,484.82 193.26,481.97 195.03,483.24 196.78,485.81 198.52,492.06 200.25,482.78 201.96,485.14 203.67,486.24 205.37,491.08 207.05,488.09 208.73,495.21 210.40,492.95 212.05,492.06 213.70,491.79 215.33,491.96 216.96,487.43 218.57,493.56 220.18,491.41 221.78,447.92 223.36,420.46 224.94,447.94 226.51,492.94 228.07,492.93 229.63,497.49 231.17,499.74 232.70,491.91 234.23,502.53 235.74,492.36 237.25,498.98 238.75,490.22 240.25,501.53 241.73,504.25 243.21,493.47 244.67,499.86 246.13,506.28 247.59,499.05 249.03,501.65 250.47,501.30 251.90,487.31 253.32,496.60 254.73,497.45 256.14,510.91 257.54,498.38 258.93,504.78 260.32,503.44 261.70,501.72 263.07,493.77 264.43,500.07 265.79,495.85 267.14,492.63 268.49,500.45 269.83,498.92 271.16,501.70 272.48,501.09 273.80,504.89 275.11,508.73 276.42,495.05 277.72,496.74 279.01,506.04 280.30,509.84 281.58,498.48 282.86,499.89 284.13,506.12 285.39,504.01 286.65,502.34 287.90,493.46 289.15,497.78 290.39,490.94 291.62,491.81 292.85,503.15 294.08,507.06 295.29,502.58 296.51,502.41 297.71,506.74 298.92,504.41 300.11,499.03 301.31,500.64 302.49,507.35 303.67,512.55 304.85,490.83 306.02,498.49 307.19,503.69 308.35,493.36 309.50,490.28 310.66,515.63 311.80,505.71 312.94,509.73 314.08,505.79 315.21,504.60 316.34,502.54 317.46,497.80 318.58,503.02 319.70,508.31 320.80,494.29 321.91,498.96 323.01,503.63 324.11,501.76 325.20,501.69 326.28,500.55 327.37,504.61 328.45,495.26 329.52,497.78 330.59,504.47 331.66,484.31 332.72,419.71 333.77,391.47 334.83,419.78 335.88,484.67 336.92,499.58 337.96,503.26 339.00,498.60 340.03,514.77 341.06,501.77 342.09,511.60 343.11,498.99 344.13,499.70 345.14,500.68 346.15,505.37 347.16,503.94 348.16,497.10 349.16,519.36 350.16,510.57 351.15,501.33 352.14,505.77 353.12,498.27 354.10,500.56 355.08,501.13 356.06,494.68 357.03,505.52 357.99,510.15 358.96,504.84 359.92,499.17 360.88,502.46 361.83,503.15 362.78,505.22 363.73,498.58 364.67,511.25 365.61,497.04 366.55,506.07 367.48,500.83 368.41,501.15 369.34,501.58 370.27,497.13 371.19,497.65 372.11,503.20 373.02,505.16 373.93,507.17 374.84,504.21 375.75,497.86 376.65,496.13 377.55,501.31 378.45,519.28 379.34,498.18 380.24,494.80 381.12,499.34 382.01,497.08 382.89,499.30 383.77,502.24 384.65,504.01 385.52,503.71 386.39,495.71 387.26,510.97 388.13,505.70 388.99,495.11 389.85,505.24 390.71,501.61 391.57,496.71 392.42,499.39 393.27,503.23 394.11,492.22 394.96,498.74 395.80,503.02 396.64,509.18 397.48,512.66 398.31,501.48 399.14,508.09 399.97,500.42 400.80,496.50 401.62,503.66 402.44,506.31 403.26,501.50 404.08,511.37 404.89,520.69 405.70,495.15 406.51,509.56 407.32,503.35 408.12,503.14 408.93,505.82 409.73,494.31 410.52,508.59 411.32,489.96 412.11,470.53 412.90,493.97 413.69,495.89 414.48,498.00 415.26,499.32 416.04,490.88 416.82,504.32 417.60,508.99 418.37,504.55 419.14,496.14 419.91,508.23 420.68,498.60 421.45,505.87 422.21,504.80 422.97,503.11 423.73,509.65 424.49,498.94 425.25,497.36 426.00,506.11 426.75,503.77 427.50,502.82 428.25,503.33 428.99,495.27 429.73,512.62 430.48,506.77 431.21,505.85 431.95,499.57 432.69,513.45 433.42,500.96 434.15,499.85 434.88,501.41 435.61,496.49 436.33,515.20 437.05,499.32 437.78,504.97 438.50,500.22 439.21,499.58 439.93,499.09 440.64,501.50 441.35,494.18 442.06,522.76 442.77,503.56 443.48,499.13 444.18,497.73 444.89,502.22 445.59,500.44 446.29,502.40 446.98,493.32 447.68,508.82 448.37,510.79 449.06,498.68 449.75,500.03 450.44,506.71 451.13,493.96 451.82,492.48 452.50,496.29 453.18,514.17 453.86,507.91 454.54,504.10 455.21,495.12 455.89,514.55 456.56,506.07 457.23,501.48 457.90,497.61 458.57,505.26 459.24,511.70 459.90,495.76 460.57,499.45 461.23,521.45 461.89,519.77 462.55,509.98 463.20,499.67 463.86,505.15 464.51,503.44 465.17,512.37 465.82,507.84 466.47,506.35 467.11,513.86 467.76,508.30 468.40,498.71 469.05,507.29 469.69,496.13 470.33,504.34 470.97,512.84 471.60,498.28 472.24,452.85 472.87,425.99 473.51,453.70 474.14,497.06 474.77,492.53 475.39,509.52 476.02,507.51 476.65,510.63 477.27,474.03 477.89,497.91 478.51,500.45 479.13,496.91 479.75,506.20 480.37,508.75 480.98,502.96 481.60,508.34 482.21,502.17 482.82,496.89 483.43,496.32 484.04,510.79 484.65,502.83 485.25,490.18 485.86,502.51 486.46,502.84 487.06,498.51 487.66,520.92 488.26,499.98 488.86,510.41 489.46,505.52 490.05,502.92 490.65,517.90 491.24,497.02 491.83,508.64 492.42,500.72 493.01,506.49 493.60,494.22 494.18,521.83 494.77,524.91 495.35,502.47 495.93,514.72 496.51,499.89 497.09,492.73 497.67,497.99 498.25,505.52 498.83,518.76 499.40,500.11 499.98,516.35 500.55,495.98 501.12,508.78 501.69,501.71 502.26,514.91 502.83,506.08 503.39,496.72 503.96,502.18 504.52,504.92 505.09,502.40 505.65,511.67 506.21,506.02 506.77,504.87 507.33,505.15 507.89,502.14 508.44,504.32 509.00,510.79 509.55,510.95 510.10,501.11 510.66,505.53 511.21,497.53 511.76,501.41 512.30,503.68 512.85,491.75 513.40,510.83 513.94,508.53 514.49,506.67 515.03,508.86 515.57,509.10 516.11,497.76 516.65,504.68 517.19,501.49 517.73,498.36 518.27,519.88 518.80,514.76 519.34,501.36 519.87,507.06 520.40,498.92 520.93,516.92 521.46,509.72 521.99,497.86 522.52,477.16 523.05,494.71 523.57,499.15 524.10,499.32 524.62,510.18 525.15,498.63 525.67,506.59 526.19,503.19 526.71,502.63 527.23,505.13 527.75,474.67 528.26,506.62 528.78,514.43 529.30,514.06 529.81,500.83 530.32,499.97 530.84,497.17 531.35,501.95 531.86,506.91 532.37,514.14 532.87,500.00 533.38,512.83 533.89,511.23 534.39,519.90 534.90,498.80 535.40,502.50 535.91,501.50 536.41,501.54 536.91,513.52 537.41,506.53 537.91,509.48 538.41,501.24 538.90,503.99 539.40,501.22 539.90,519.24 540.39,508.68 540.88,496.38 541.38,513.05 541.87,500.89 542.36,501.97 542.85,508.82 543.34,510.75 543.83,500.35 544.32,507.15 544.80,503.95 545.29,505.64 545.77,502.26 546.26,502.63 546.74,526.49 547.22,492.14 547.70,501.76 548.19,501.66 548.66,519.08 549.14,495.73 549.62,516.94 550.10,501.49 550.58,504.98 551.05,505.85 551.53,511.90 552.00,515.43 552.47,505.90 552.95,499.70 553.42,518.41 553.89,498.25 554.36,511.61 554.83,505.99 555.30,500.47 555.76,501.54 556.23,504.33 556.70,509.01 557.16,506.39 557.62,502.07 558.09,510.36 558.55,522.37 559.01,511.85 559.47,504.51 559.93,509.61 560.39,505.27" fill="none" stroke="url(#sg)" stroke-width="0.95" stroke-linejoin="bevel"/><polyline points="560.39,505.27 560.85,509.00 561.31,497.71 561.77,504.76 562.22,500.27 562.68,531.95 563.14,506.41 563.59,501.49 564.04,467.34 564.50,440.74 564.95,466.71 565.40,501.33 565.85,512.32 566.30,514.13 566.75,509.30 567.20,505.10 567.64,502.86 568.09,508.19 568.54,498.43 568.98,505.79 569.43,501.06 569.87,505.37 570.31,500.39 570.76,503.47 571.20,509.35 571.64,505.00 572.08,488.72 572.52,504.92 572.96,509.82 573.40,501.06 573.83,504.88 574.27,520.14 574.71,503.11 575.14,508.71 575.58,506.82 576.01,508.00 576.44,501.56 576.88,508.06 577.31,501.50 577.74,500.03 578.17,509.22 578.60,507.96 579.03,504.47 579.46,501.08 579.88,493.89 580.31,499.90 580.74,497.50 581.16,500.80 581.59,506.99 582.01,512.97 582.44,516.71 582.86,521.37 583.28,500.67 583.70,510.40 584.13,500.90 584.55,501.76 584.97,516.58 585.39,501.65 585.80,514.11 586.22,505.09 586.64,518.36 587.06,509.34 587.47,514.96 587.89,508.31 588.30,496.45 588.72,499.86 589.13,508.37 589.54,505.36 589.95,513.41 590.37,507.98 590.78,491.67 591.19,510.83 591.60,513.64 592.01,506.34 592.42,510.23 592.82,509.78 593.23,520.64 593.64,527.20 594.04,509.50 594.45,507.87 594.85,508.29 595.26,529.21 595.66,516.53 596.07,503.83 596.47,501.83 596.87,510.25 597.27,505.81 597.67,500.68 598.07,508.02 598.47,517.20 598.87,504.43 599.27,510.72 599.67,491.90 600.06,511.84 600.46,498.83 600.86,476.72 601.25,491.98 601.65,508.70 602.04,503.98 602.44,513.70 602.83,513.31 603.22,500.52 603.61,497.59 604.00,513.75 604.40,507.73 604.79,505.91 605.18,494.99 605.57,494.48 605.95,501.25 606.34,508.90 606.73,527.35 607.12,493.98 607.50,503.01 607.89,496.93 608.27,504.69 608.66,521.04 609.04,506.52 609.43,491.29 609.81,508.25 610.19,500.61 610.58,504.80 610.96,511.10 611.34,509.63 611.72,510.43 612.10,507.42 612.48,505.71 612.86,507.30 613.24,496.84 613.61,497.05 613.99,493.11 614.37,522.91 614.74,500.96 615.12,500.32 615.50,494.65 615.87,501.03 616.24,508.34 616.62,496.92 616.99,501.02 617.36,516.43 617.74,517.49 618.11,506.23 618.48,514.57 618.85,518.15 619.22,502.67 619.59,505.14 619.96,496.07 620.33,506.31 620.70,505.73 621.06,502.92 621.43,513.23 621.80,514.77 622.16,512.07 622.53,499.50 622.90,504.16 623.26,508.82 623.62,499.60 623.99,504.99 624.35,510.11 624.71,502.78 625.08,502.24 625.44,501.53 625.80,500.85 626.16,498.83 626.52,492.47 626.88,509.96 627.24,498.67 627.60,504.43 627.96,501.91 628.32,499.83 628.67,510.00 629.03,499.49 629.39,516.57 629.74,500.37 630.10,508.41 630.46,502.76 630.81,513.19 631.16,519.78 631.52,505.10 631.87,499.31 632.22,504.52 632.58,474.99 632.93,448.01 633.28,472.04 633.63,501.13 633.98,504.94 634.33,496.35 634.68,511.85 635.03,500.67 635.38,500.69 635.73,506.10 636.08,510.44 636.42,518.93 636.77,506.50 637.12,515.13 637.46,511.49 637.81,509.68 638.16,508.46 638.50,510.92 638.85,509.38 639.19,498.88 639.53,518.51 639.88,509.79 640.22,506.35 640.56,502.70 640.90,506.62 641.24,508.62 641.59,507.84 641.93,509.49 642.27,505.53 642.61,502.53 642.95,507.37 643.28,506.51 643.62,505.15 643.96,512.67 644.30,508.98 644.64,512.45 644.97,513.90 645.31,514.35 645.64,511.46 645.98,503.02 646.32,514.86 646.65,504.08 646.98,520.93 647.32,497.67 647.65,516.54 647.98,507.02 648.32,501.37 648.65,503.85 648.98,509.22 649.31,497.53 649.64,512.93 649.97,497.55 650.31,512.97 650.64,501.71 650.96,512.22 651.29,510.01 651.62,509.41 651.95,525.17 652.28,511.30 652.61,519.32 652.93,501.13 653.26,499.69 653.59,507.22 653.91,501.31 654.24,509.79 654.56,503.90 654.89,500.03 655.21,511.67 655.54,506.61 655.86,515.59 656.18,507.17 656.51,480.44 656.83,495.32 657.15,524.23 657.47,502.23 657.79,509.98 658.11,507.93 658.43,515.21 658.75,504.54 659.07,506.82 659.39,511.19 659.71,497.95 660.03,513.48 660.35,508.10 660.67,514.42 660.99,517.40 661.30,492.25 661.62,481.33 661.94,498.51 662.25,506.90 662.57,515.49 662.88,517.14 663.20,523.89 663.51,504.76 663.83,507.39 664.14,507.40 664.45,500.97 664.77,494.94 665.08,510.54 665.39,507.65 665.70,505.49 666.02,500.97 666.33,500.58 666.64,506.19 666.95,504.96 667.26,512.38 667.57,497.57 667.88,506.77 668.19,501.03 668.50,511.40 668.81,503.78 669.11,507.15 669.42,497.49 669.73,507.97 670.04,500.92 670.34,511.75 670.65,506.64 670.96,522.09 671.26,503.35 671.57,506.91 671.87,517.52 672.18,510.39 672.48,508.63 672.79,519.63 673.09,518.37 673.39,502.29 673.70,503.46 674.00,515.52 674.30,499.59 674.60,506.17 674.90,497.50 675.21,511.50 675.51,498.16 675.81,493.13 676.11,497.52 676.41,512.39 676.71,510.94 677.01,525.24 677.31,504.55 677.61,502.57 677.90,501.40 678.20,498.11 678.50,515.15 678.80,501.68 679.09,510.26 679.39,504.58 679.69,507.62 679.98,501.46 680.28,505.64 680.57,513.07 680.87,513.95 681.16,503.66 681.46,512.32 681.75,503.25 682.05,517.07 682.34,509.77 682.63,508.04 682.93,501.62 683.22,512.54 683.51,504.59 683.80,506.94 684.10,497.41 684.39,503.91 684.68,507.91 684.97,502.69 685.26,520.01 685.55,508.09 685.84,510.77 686.13,532.60 686.42,498.74 686.71,505.95 687.00,501.16 687.28,478.08 687.57,452.84 687.86,480.01 688.15,503.35 688.43,508.05 688.72,492.98 689.01,507.67 689.29,508.52 689.58,503.01 689.87,501.49 690.15,514.98 690.44,506.01 690.72,468.63 691.00,500.30 691.29,519.96 691.57,511.63 691.86,512.92 692.14,503.76 692.42,501.09 692.70,508.41 692.99,510.55 693.27,508.39 693.55,500.22 693.83,503.38 694.11,513.90 694.39,503.41 694.68,506.14 694.96,503.06 695.24,500.12 695.52,511.81 695.79,507.45 696.07,506.91 696.35,500.52 696.63,512.63 696.91,517.16 697.19,513.11 697.47,511.45 697.74,500.43 698.02,492.78 698.30,515.19 698.57,511.54 698.85,513.07 699.13,513.24 699.40,496.49 699.68,509.35 699.95,503.03 700.23,510.80 700.50,511.00 700.78,504.99 701.05,520.12 701.32,509.27 701.60,509.82 701.87,500.83 702.14,502.36 702.42,497.45 702.69,520.44 702.96,500.31 703.23,504.16 703.50,524.14 703.78,509.77 704.05,505.50 704.32,495.97 704.59,501.00 704.86,508.27 705.13,519.51 705.40,507.91 705.67,510.58 705.94,498.42 706.21,498.72 706.47,499.89 706.74,505.18 707.01,507.91 707.28,509.55 707.55,507.34 707.81,512.12 708.08,513.42 708.35,502.79 708.61,503.73 708.88,509.08 709.15,509.67 709.41,518.74 709.68,512.50 709.94,511.27 710.21,504.18 710.47,505.68 710.74,506.45 711.00,500.63 711.27,479.58 711.53,494.30 711.79,505.75 712.06,499.77 712.32,495.68 712.58,514.49 712.84,501.42 713.11,519.54 713.37,500.35 713.63,508.99 713.89,495.87 714.15,509.48 714.41,512.82 714.67,506.33 714.93,515.25 715.20,519.23 715.46,499.36 715.71,504.61 715.97,511.87 716.23,506.32 716.49,506.97 716.75,521.49 717.01,502.95 717.27,507.24 717.53,503.07 717.78,514.25 718.04,518.58 718.30,496.99 718.56,502.36 718.81,504.04 719.07,510.83 719.32,472.62 719.58,508.07 719.84,506.28 720.09,502.44 720.35,514.51 720.60,518.80 720.86,503.62 721.11,504.00 721.37,507.68 721.62,506.43 721.87,510.40 722.13,511.39 722.38,501.13 722.63,502.96 722.89,517.23 723.14,506.82 723.39,495.06 723.65,512.78 723.90,511.50 724.15,500.13 724.40,509.88 724.65,508.24 724.90,515.47 725.15,507.07 725.40,506.00 725.65,501.85 725.91,502.86 726.15,506.02 726.40,502.82 726.65,508.12 726.90,516.69 727.15,503.19 727.40,509.91 727.65,511.62 727.90,504.40 728.15,512.70 728.39,514.04 728.64,503.67 728.89,509.63 729.14,508.11 729.38,509.06 729.63,502.59 729.88,511.28 730.12,513.67 730.37,509.44 730.61,506.07 730.86,516.54 731.11,519.55 731.35,503.69 731.60,509.99 731.84,517.54 732.09,505.95 732.33,504.93 732.57,524.05 732.82,484.91 733.06,463.80 733.31,488.40 733.55,504.50 733.79,512.87 734.03,503.88 734.28,506.66 734.52,519.05 734.76,500.40 735.00,500.56 735.24,510.33 735.49,509.82 735.73,509.61 735.97,511.87 736.21,506.12 736.45,516.90 736.69,505.46 736.93,504.49 737.17,508.78 737.41,515.30 737.65,500.02 737.89,512.65 738.13,515.21 738.37,504.97 738.61,510.96 738.85,504.78 739.08,507.47 739.32,503.41 739.56,510.95 739.80,503.37 740.03,524.73 740.27,508.69 740.51,504.89 740.75,501.44 740.98,507.13 741.22,505.60 741.46,516.95 741.69,513.40 741.93,506.49 742.16,510.02 742.40,514.67 742.63,504.72 742.87,502.26 743.10,500.59 743.34,506.17 743.57,500.42 743.81,507.93 744.04,505.81 744.27,514.55 744.51,513.54 744.74,506.63 744.98,503.35 745.21,514.06 745.44,513.26 745.67,497.52 745.91,507.49 746.14,512.85 746.37,495.99 746.60,502.90 746.83,503.88 747.07,513.95 747.30,513.22 747.53,505.35 747.76,511.41 747.99,506.08 748.22,506.69 748.45,506.43 748.68,516.12 748.91,502.87 749.14,503.63 749.37,507.10 749.60,517.03 749.83,516.44 750.06,510.31 750.29,516.43 750.51,504.98 750.74,504.35 750.97,499.74 751.20,498.12 751.43,508.78 751.65,501.96 751.88,507.35 752.11,513.11 752.34,504.06 752.56,503.64 752.79,513.06 753.02,499.24 753.24,477.84 753.47,501.10 753.69,512.60 753.92,510.08 754.14,511.12 754.37,520.53 754.59,501.72 754.82,512.74 755.04,510.80 755.27,499.13 755.49,498.73 755.72,524.09 755.94,509.67 756.17,504.57 756.39,496.69 756.61,504.86 756.84,511.70 757.06,505.68 757.28,507.70 757.50,515.16 757.73,504.16 757.95,519.84 758.17,498.98 758.39,522.20 758.62,512.10 758.84,516.48 759.06,497.97 759.28,520.88 759.50,503.62 759.72,506.45 759.94,509.30 760.16,504.91 760.38,512.40 760.60,506.74 760.82,501.82 761.04,507.54 761.26,506.90 761.48,505.13 761.70,509.61 761.92,526.05 762.14,503.58 762.36,511.58 762.58,516.61 762.80,508.89 763.02,510.23 763.23,503.03 763.45,517.67 763.67,501.93 763.89,509.38 764.10,507.11 764.32,508.99 764.54,494.27 764.76,511.76 764.97,511.96 765.19,520.37 765.40,508.10 765.62,472.79 765.84,512.73 766.05,502.66 766.27,522.37 766.48,506.17 766.70,523.87 766.91,505.42 767.13,499.21 767.34,508.31 767.56,507.48 767.77,518.31 767.99,522.33 768.20,510.86 768.42,509.69 768.63,503.62 768.84,508.07 769.06,503.25 769.27,503.94 769.48,500.32 769.70,499.18 769.91,505.61 770.12,511.62 770.33,510.65 770.55,517.80 770.76,506.23 770.97,504.03 771.18,505.11 771.39,503.88 771.61,517.56 771.82,489.82 772.03,465.48 772.24,487.52 772.45,500.89 772.66,507.24 772.87,507.55 773.08,510.92 773.29,509.31 773.50,510.06 773.71,500.93 773.92,504.85 774.13,499.62 774.34,513.29 774.55,502.01 774.76,508.51 774.97,509.30 775.18,510.05 775.38,510.08 775.59,513.90 775.80,507.26 776.01,500.18 776.22,513.23 776.43,525.13 776.63,497.88 776.84,513.50 777.05,512.51 777.26,515.71 777.46,504.75 777.67,507.72 777.88,511.64 778.08,510.33 778.29,516.05 778.49,492.62 778.70,513.68 778.91,512.61 779.11,506.45 779.32,507.86 779.52,509.35 779.73,507.04 779.93,477.96 780.14,509.74 780.34,498.12 780.55,515.31 780.75,510.87 780.96,497.06 781.16,506.34 781.37,495.87 781.57,502.20 781.77,511.50 781.98,498.86 782.18,498.53 782.38,509.35 782.59,509.99 782.79,511.28 782.99,511.17 783.19,514.93 783.40,516.21 783.60,506.27 783.80,505.63 784.00,512.61 784.21,516.23 784.41,513.73 784.61,505.94 784.81,522.85 785.01,517.11 785.21,520.63 785.41,498.39 785.62,503.57 785.82,500.48 786.02,512.80 786.22,500.68 786.42,520.63 786.62,508.86 786.82,512.14 787.02,509.10 787.22,523.50 787.42,504.62 787.62,513.12 787.82,516.16 788.01,512.38 788.21,498.83 788.41,502.25 788.61,514.77 788.81,503.75 789.01,515.50 789.21,514.31 789.40,497.40 789.60,477.40 789.80,502.35 790.00,507.95 790.20,517.89 790.39,504.36 790.59,507.08 790.79,512.38 790.98,499.37 791.18,497.85 791.38,503.60 791.57,504.31 791.77,510.12 791.97,508.56 792.16,509.50 792.36,516.48 792.55,519.46 792.75,519.13 792.95,515.63 793.14,513.95 793.34,504.21 793.53,523.37 793.73,500.14 793.92,510.74 794.12,510.77 794.31,484.00 794.51,504.96 794.70,502.19 794.89,502.76 795.09,518.30 795.28,498.54 795.48,507.57 795.67,520.59 795.86,520.86 796.06,515.16 796.25,502.40 796.44,518.63 796.63,517.86 796.83,509.90 797.02,494.17 797.21,504.88 797.41,506.17 797.60,504.96 797.79,503.82 797.98,511.71 798.17,507.03 798.37,511.72 798.56,523.81 798.75,508.01 798.94,505.84 799.13,521.10 799.32,504.95 799.51,515.41 799.70,512.01 799.89,504.91 800.08,506.07 800.27,494.01 800.46,529.55 800.65,505.68 800.84,508.70 801.03,512.46 801.22,511.27 801.41,512.30 801.60,510.97 801.79,514.61 801.98,506.71 802.17,529.21 802.36,509.44 802.55,504.09 802.74,508.77 802.93,515.56 803.11,512.30 803.30,501.66 803.49,505.19 803.68,520.87 803.87,509.90 804.05,514.20 804.24,502.81 804.43,505.66 804.62,506.05 804.80,505.56 804.99,512.68 805.18,508.25 805.36,507.25 805.55,505.69 805.74,500.25 805.92,483.58 806.11,463.36 806.30,488.23 806.48,510.23 806.67,502.46 806.85,508.11 807.04,510.86 807.23,519.09 807.41,512.17 807.60,522.55 807.78,514.99 807.97,503.50 808.15,512.39 808.34,509.67 808.52,516.17 808.71,514.82 808.89,506.01 809.07,502.38 809.26,510.97 809.44,512.48 809.63,506.81 809.81,511.84 809.99,504.13 810.18,495.14 810.36,515.37 810.54,506.74 810.73,511.26 810.91,496.15 811.09,520.90 811.28,514.76 811.46,521.71 811.64,514.02 811.82,510.59 812.01,502.46 812.19,505.66 812.37,514.07 812.55,502.48 812.73,505.88 812.92,518.72 813.10,517.76 813.28,482.14 813.46,507.60 813.64,510.87 813.82,512.30 814.00,514.08 814.18,496.91 814.37,503.08 814.55,503.88 814.73,514.46 814.91,503.09 815.09,505.76 815.27,518.62 815.45,500.40 815.63,507.29 815.81,519.51 815.99,507.20 816.17,519.46 816.35,505.88 816.53,502.61 816.70,504.18 816.88,507.36 817.06,517.56 817.24,517.75 817.42,496.60 817.60,508.16 817.78,516.99 817.96,519.91 818.13,504.08 818.31,511.19 818.49,516.54 818.67,509.25 818.85,507.17 819.02,510.17 819.20,516.32 819.38,508.86 819.56,500.77 819.73,496.36 819.91,525.57 820.09,532.16 820.26,520.86 820.44,510.61 820.62,510.09 820.79,518.75 820.97,517.46 821.15,509.11 821.32,502.88 821.50,497.30 821.67,480.61 821.85,497.87 822.03,514.21 822.20,504.20 822.38,517.08 822.55,530.20 822.73,505.14 822.90,506.96 823.08,509.20 823.25,509.87 823.43,503.58 823.60,504.80 823.78,502.01 823.95,502.81 824.13,503.64 824.30,530.07 824.48,507.77 824.65,516.66 824.82,529.42 825.00,511.77 825.17,510.13 825.34,512.29 825.52,519.42 825.69,503.50 825.86,511.32 826.04,513.39 826.21,500.40 826.38,509.64 826.56,514.71 826.73,524.16 826.90,508.69 827.07,511.09 827.25,523.74 827.42,507.25 827.59,504.27 827.76,521.28 827.94,515.13 828.11,517.23 828.28,509.37 828.45,511.81 828.62,504.32 828.79,502.89 828.96,511.97 829.14,514.37 829.31,510.57 829.48,509.50 829.65,507.94 829.82,503.86 829.99,505.63 830.16,513.05 830.33,510.43 830.50,517.89 830.67,507.24 830.84,510.25 831.01,513.21 831.18,517.08 831.35,509.82 831.52,506.71 831.69,504.23 831.86,505.44 832.03,520.87 832.20,514.59 832.37,515.61 832.54,543.37 832.71,510.45 832.88,512.22 833.04,517.06 833.21,516.77 833.38,515.80 833.55,508.90 833.72,505.83 833.89,509.73 834.05,508.78 834.22,507.11 834.39,514.98 834.56,524.57 834.73,539.26 834.89,505.44 835.06,518.53 835.23,514.26 835.40,508.74 835.56,505.12 835.73,524.87 835.90,513.02 836.06,519.66 836.23,487.31 836.40,464.47 836.56,490.05 836.73,524.02 836.90,511.36 837.06,498.60 837.23,505.50 837.40,504.10 837.56,516.95 837.73,515.45 837.89,514.82 838.06,499.92 838.22,522.54 838.39,510.39 838.56,526.35 838.72,518.13 838.89,503.26 839.05,506.22 839.22,513.09 839.38,509.33 839.55,505.61 839.71,506.82 839.87,518.27 840.04,516.59 840.20,502.56 840.37,526.95 840.53,503.97 840.70,506.90 840.86,506.90 841.02,510.55 841.19,511.72 841.35,513.63 841.52,505.61 841.68,507.49 841.84,522.22 842.01,513.87 842.17,507.34 842.33,514.71 842.49,512.60 842.66,505.14 842.82,506.53 842.98,513.58 843.15,502.34 843.31,502.05 843.47,501.45 843.63,501.41 843.80,509.68 843.96,503.42 844.12,505.82 844.28,508.26 844.44,517.29 844.61,515.39 844.77,523.70 844.93,494.90 845.09,517.51 845.25,507.06 845.41,508.37 845.57,504.16 845.73,509.68 845.90,510.20 846.06,513.04 846.22,507.15 846.38,508.88 846.54,496.24 846.70,508.14 846.86,500.78 847.02,505.17 847.18,516.45 847.34,510.47 847.50,500.88 847.66,502.43 847.82,498.15 847.98,494.09 848.14,507.58 848.30,516.66 848.46,506.85 848.62,522.64 848.78,511.29 848.94,512.66 849.10,520.26 849.25,513.54 849.41,510.36 849.57,509.29 849.73,514.51 849.89,513.36 850.05,513.94 850.21,517.16" fill="none" stroke="url(#sg)" stroke-width="1.15" stroke-linejoin="bevel"/></svg>
<div class="t" style="left:11.00px;top:287.00px;font-size:8.6px;color:#00c000;transform:scaleX(0.8194);">THD 0.0010% (1007.81Hz)</div>
<div class="t" style="left:806.00px;top:287.00px;font-size:8.6px;color:#00b8b8;transform:scaleX(0.8042);">0.00000</div>
<div class="t" style="left:864.50px;top:282.00px;font-size:6.8px;color:#1428e0;font-weight:bold;transform:scaleX(0.9820);">dBr</div>
<div class="t" style="left:866.50px;top:538.00px;font-size:9.2px;color:#1428e0;font-weight:bold;transform:scaleX(0.8894);">Hz</div>
<div class="t" style="left:850.80px;top:298.00px;font-size:6.5px;color:#111;transform:scaleX(0.9314);">-80.0</div>
<div class="t" style="left:850.80px;top:342.00px;font-size:6.5px;color:#111;transform:scaleX(0.9314);">-90.0</div>
<div class="t" style="left:850.80px;top:386.00px;font-size:6.5px;color:#111;transform:scaleX(0.8952);">-100.0</div>
<div class="t" style="left:850.80px;top:430.00px;font-size:6.5px;color:#111;transform:scaleX(0.9193);">-110.0</div>
<div class="t" style="left:850.80px;top:474.00px;font-size:6.5px;color:#111;transform:scaleX(0.8952);">-120.0</div>
<div class="t" style="left:850.80px;top:518.00px;font-size:6.5px;color:#111;transform:scaleX(0.8952);">-130.0</div>
<div class="t" style="left:29.33px;top:539.00px;font-size:7.5px;color:#111;font-weight:bold;">1k</div>
<div class="t" style="left:218.29px;top:539.00px;font-size:7.5px;color:#111;">2k</div>
<div class="t" style="left:328.69px;top:539.00px;font-size:7.5px;color:#111;">3k</div>
<div class="t" style="left:407.03px;top:539.00px;font-size:7.5px;color:#111;">4k</div>
<div class="t" style="left:467.79px;top:539.00px;font-size:7.5px;color:#111;">5k</div>
<div class="t" style="left:517.44px;top:539.00px;font-size:7.5px;color:#111;">6k</div>
<div class="t" style="left:559.42px;top:539.00px;font-size:7.5px;color:#111;">7k</div>
<div class="t" style="left:595.78px;top:539.00px;font-size:7.5px;color:#111;">8k</div>
<div class="t" style="left:654.24px;top:539.00px;font-size:7.5px;color:#111;font-weight:bold;">10k</div>
<div class="r" style="left:817px;top:32px;width:98px;height:243px;box-sizing:border-box;border:1px solid #dcdcdc;"></div>
<div class="r" style="left:821.6px;top:31px;width:26.200000000000045px;height:3px;background:inherit;"></div>
<div class="t" style="left:822.60px;top:29.00px;font-size:8.6px;color:#1a1a1a;transform:scaleX(0.8300);">Ch A(L)</div>
<div class="t" style="left:819.00px;top:37.00px;font-size:8.6px;color:#1a1a1a;transform:scaleX(0.8423);">Vpos Trig</div>
<div class="r" style="left:825px;top:48px;width:4px;height:204px;box-sizing:border-box;background:#e7eaea;border:1px solid #d6d6d6;"></div>
<div class="r" style="left:838px;top:48px;width:4px;height:204px;box-sizing:border-box;background:#e7eaea;border:1px solid #d6d6d6;"></div>
<div class="r" style="left:824px;top:148px;width:6px;height:3px;background:#0a7ad6;"></div>
<div class="r" style="left:837px;top:148px;width:6px;height:3px;background:#0a7ad6;"></div>
<div class="r" style="left:855px;top:39px;width:11px;height:9px;box-sizing:border-box;background:#e1e1e1;border:1px solid #cfcfcf;"></div>
<div class="t" style="left:858.40px;top:40.00px;font-size:8.6px;color:#1a1a1a;transform:scaleX(0.8781);">0</div>
<div class="t" style="left:881.50px;top:39.00px;font-size:8.6px;color:#1a1a1a;transform:scaleX(0.8854);">ms/d</div>
<div class="r" style="left:854.5px;top:49px;width:32.5px;height:14.5px;box-sizing:border-box;background:#f0f0f0;border:1px solid #c4c4c4;"></div>
<div class="t" style="left:857.00px;top:51.00px;font-size:9.4px;color:#1a1a1a;transform:scaleX(0.7652);">0.2367</div>
<div class="r" style="left:888.5px;top:50px;width:9.0px;height:5.549999999999997px;box-sizing:border-box;background:#e9e9e9;border:1px solid #d4d4d4;"></div>
<div class="r" style="left:888.5px;top:56.95px;width:9.0px;height:5.549999999999997px;box-sizing:border-box;background:#e9e9e9;border:1px solid #d4d4d4;"></div>
<svg width="1024" height="550"><path d="M891.0 54 L893.0 52 L895.0 54 Z M891.0 58.5 L893.0 60.5 L895.0 58.5 Z" fill="#222" stroke="#222" stroke-width="0.6"/></svg>
<div class="t" style="left:855.00px;top:68.00px;font-size:8.6px;color:#1a1a1a;transform:scaleX(0.8188);">Zoom</div>
<div class="t" style="left:849.00px;top:77.00px;font-size:8.6px;color:#1a1a1a;transform:scaleX(0.9956);">×</div>
<div class="r" style="left:854.5px;top:75.5px;width:32.5px;height:13.5px;box-sizing:border-box;background:#f0f0f0;border:1px solid #c4c4c4;"></div>
<div class="t" style="left:857.00px;top:77.00px;font-size:9.4px;color:#1a1a1a;transform:scaleX(0.6695);">1</div>
<div class="r" style="left:888.5px;top:76px;width:9.0px;height:5.549999999999997px;box-sizing:border-box;background:#e9e9e9;border:1px solid #d4d4d4;"></div>
<div class="r" style="left:888.5px;top:82.95px;width:9.0px;height:5.549999999999997px;box-sizing:border-box;background:#e9e9e9;border:1px solid #d4d4d4;"></div>
<svg width="1024" height="550"><path d="M891.0 80 L893.0 78 L895.0 80 Z M891.0 84.5 L893.0 86.5 L895.0 84.5 Z" fill="#222" stroke="#222" stroke-width="0.6"/></svg>
<div class="r" style="left:903px;top:38.5px;width:8px;height:221.5px;box-sizing:border-box;background:#e0e0e0;border:1px solid #d0d0d0;"></div>
<div class="r" style="left:903px;top:121px;width:8px;height:139px;background:#08a82c;"></div>
<div class="t" style="left:885.50px;top:262.00px;font-size:8.6px;color:#222;transform:scaleX(0.7968);">-3.96dB</div>
<div class="r" style="left:850px;top:97px;width:9px;height:9px;box-sizing:border-box;background:#fff;border:1px solid #333333;"></div>
<svg width="1024" height="550"><path d="M851.8 101.6 L853.8 103.8 L857.4 99.2" fill="none" stroke="#222" stroke-width="1"/></svg>
<div class="t" style="left:861.00px;top:98.00px;font-size:8.6px;color:#1a1a1a;transform:scaleX(0.8625);">Trig</div>
<div class="r" style="left:876.5px;top:97px;width:9.0px;height:9px;box-sizing:border-box;background:#fff;border:1px solid #333333;"></div>
<div class="t" style="left:887.00px;top:98.00px;font-size:8.6px;color:#1a1a1a;transform:scaleX(0.9588);">Inv</div>
<div class="r" style="left:850px;top:112.5px;width:48px;height:64.5px;box-sizing:border-box;border:1px solid #dcdcdc;"></div>
<div class="r" style="left:854px;top:111.5px;width:24.5px;height:3.0px;background:inherit;"></div>
<div class="t" style="left:855.00px;top:109.00px;font-size:8.6px;color:#1a1a1a;transform:scaleX(0.8357);">Trigger</div>
<div class="t" style="left:860.00px;top:119.00px;font-size:8.6px;color:#1a1a1a;transform:scaleX(0.8410);">Slope</div>
<div class="r" style="left:853px;top:128.5px;width:9px;height:9.0px;box-sizing:border-box;background:#fff;border:1px solid #333333;border-radius:50%;"></div>
<div class="r" style="left:855.5px;top:131.0px;width:4.0px;height:4.0px;background:#222222;border-radius:50%;"></div>
<div class="t" style="left:864.00px;top:129.00px;font-size:8.6px;color:#1a1a1a;transform:scaleX(0.8468);">Positive</div>
<div class="r" style="left:853px;top:139px;width:9px;height:9px;box-sizing:border-box;background:#fff;border:1px solid #333333;border-radius:50%;"></div>
<div class="t" style="left:864.00px;top:140.00px;font-size:8.6px;color:#1a1a1a;transform:scaleX(0.8544);">Negative</div>
<div class="t" style="left:855.00px;top:153.00px;font-size:6.8px;color:#1a1a1a;font-weight:bold;transform:scaleX(0.7767);">Delta Th %</div>
<div class="r" style="left:854.5px;top:159.5px;width:27.5px;height:14.0px;box-sizing:border-box;background:#f0f0f0;border:1px solid #c4c4c4;"></div>
<div class="t" style="left:857.00px;top:161.00px;font-size:9.4px;color:#1a1a1a;transform:scaleX(0.8129);">25</div>
<div class="r" style="left:882.5px;top:160px;width:9.0px;height:5.800000000000011px;box-sizing:border-box;background:#e9e9e9;border:1px solid #d4d4d4;"></div>
<div class="r" style="left:882.5px;top:167.2px;width:9.0px;height:5.800000000000011px;box-sizing:border-box;background:#e9e9e9;border:1px solid #d4d4d4;"></div>
<svg width="1024" height="550"><path d="M885.0 164 L887.0 162 L889.0 164 Z M885.0 169 L887.0 171 L889.0 169 Z" fill="#222" stroke="#222" stroke-width="0.6"/></svg>
<div class="r" style="left:848.5px;top:180.5px;width:9.0px;height:9.0px;box-sizing:border-box;background:#fff;border:1px solid #333333;"></div>
<div class="t" style="left:860.00px;top:182.00px;font-size:8.6px;color:#1a1a1a;transform:scaleX(0.8022);">D/A</div>
<div class="r" style="left:848.5px;top:190.7px;width:9.0px;height:9.0px;box-sizing:border-box;background:#fff;border:1px solid #333333;"></div>
<div class="t" style="left:860.00px;top:192.00px;font-size:8.6px;color:#1a1a1a;transform:scaleX(0.7673);">DCremoval</div>
<div class="r" style="left:848.5px;top:200.9px;width:9.0px;height:9.0px;box-sizing:border-box;background:#fff;border:1px solid #333333;"></div>
<div class="t" style="left:860.00px;top:202.00px;font-size:8.6px;color:#1a1a1a;transform:scaleX(0.8185);">Values</div>
<div class="r" style="left:823px;top:258px;width:11px;height:11px;box-sizing:border-box;background:#e1e1e1;border:1px solid #cfcfcf;"></div>
<div class="t" style="left:826.40px;top:260.00px;font-size:8.6px;color:#1a1a1a;transform:scaleX(0.8781);">0</div>
<div class="r" style="left:920px;top:32px;width:98px;height:243px;box-sizing:border-box;border:1px solid #dcdcdc;"></div>
<div class="r" style="left:924.6px;top:31px;width:26.200000000000045px;height:3px;background:inherit;"></div>
<div class="t" style="left:925.60px;top:29.00px;font-size:8.6px;color:#1a1a1a;transform:scaleX(0.7792);">Ch B(R)</div>
<div class="t" style="left:922.00px;top:37.00px;font-size:8.6px;color:#a0a0a0;transform:scaleX(0.8423);">Vpos Trig</div>
<div class="r" style="left:928px;top:48px;width:4px;height:204px;box-sizing:border-box;background:#e7eaea;border:1px solid #d6d6d6;"></div>
<div class="r" style="left:941px;top:48px;width:4px;height:204px;box-sizing:border-box;background:#e7eaea;border:1px solid #d6d6d6;"></div>
<div class="r" style="left:927px;top:148px;width:6px;height:3px;background:#0a7ad6;"></div>
<div class="r" style="left:940px;top:47px;width:6px;height:3px;background:#c8c8c8;"></div>
<div class="r" style="left:958px;top:39px;width:11px;height:9px;box-sizing:border-box;background:#cccccc;border:1px solid #cfcfcf;"></div>
<div class="t" style="left:961.40px;top:40.00px;font-size:8.6px;color:#a0a0a0;transform:scaleX(0.8781);">0</div>
<div class="t" style="left:984.50px;top:39.00px;font-size:8.6px;color:#a0a0a0;transform:scaleX(0.8854);">ms/d</div>
<div class="r" style="left:957.5px;top:49px;width:32.5px;height:14.5px;box-sizing:border-box;background:#f0f0f0;border:1px solid #c4c4c4;"></div>
<div class="t" style="left:960.00px;top:51.00px;font-size:9.4px;color:#a0a0a0;transform:scaleX(0.8521);">2.3667</div>
<div class="r" style="left:991.5px;top:50px;width:9.0px;height:5.549999999999997px;box-sizing:border-box;background:#e9e9e9;border:1px solid #d4d4d4;"></div>
<div class="r" style="left:991.5px;top:56.95px;width:9.0px;height:5.549999999999997px;box-sizing:border-box;background:#e9e9e9;border:1px solid #d4d4d4;"></div>
<svg width="1024" height="550"><path d="M994.0 54 L996.0 52 L998.0 54 Z M994.0 58.5 L996.0 60.5 L998.0 58.5 Z" fill="#999" stroke="#999" stroke-width="0.6"/></svg>
<div class="t" style="left:958.00px;top:68.00px;font-size:8.6px;color:#a0a0a0;transform:scaleX(0.8188);">Zoom</div>
<div class="t" style="left:952.00px;top:77.00px;font-size:8.6px;color:#a0a0a0;transform:scaleX(0.9956);">×</div>
<div class="r" style="left:957.5px;top:75.5px;width:32.5px;height:13.5px;box-sizing:border-box;background:#f0f0f0;border:1px solid #c4c4c4;"></div>
<div class="t" style="left:960.00px;top:77.00px;font-size:9.4px;color:#a0a0a0;transform:scaleX(0.6695);">1</div>
<div class="r" style="left:991.5px;top:76px;width:9.0px;height:5.549999999999997px;box-sizing:border-box;background:#e9e9e9;border:1px solid #d4d4d4;"></div>
<div class="r" style="left:991.5px;top:82.95px;width:9.0px;height:5.549999999999997px;box-sizing:border-box;background:#e9e9e9;border:1px solid #d4d4d4;"></div>
<svg width="1024" height="550"><path d="M994.0 80 L996.0 78 L998.0 80 Z M994.0 84.5 L996.0 86.5 L998.0 84.5 Z" fill="#999" stroke="#999" stroke-width="0.6"/></svg>
<div class="r" style="left:1006px;top:38.5px;width:8px;height:221.5px;box-sizing:border-box;background:#e0e0e0;border:1px solid #d0d0d0;"></div>
<div class="t" style="left:992.50px;top:262.00px;font-size:8.6px;color:#a0a0a0;transform:scaleX(0.8046);">-inf dB</div>
<div class="r" style="left:953px;top:97px;width:9px;height:9px;box-sizing:border-box;background:#fff;border:1px solid #cccccc;"></div>
<div class="t" style="left:964.00px;top:98.00px;font-size:8.6px;color:#a0a0a0;transform:scaleX(0.8625);">Trig</div>
<div class="r" style="left:979.5px;top:97px;width:9.0px;height:9px;box-sizing:border-box;background:#fff;border:1px solid #cccccc;"></div>
<div class="t" style="left:990.00px;top:98.00px;font-size:8.6px;color:#a0a0a0;transform:scaleX(0.9588);">Inv</div>
<div class="r" style="left:953px;top:112.5px;width:48px;height:64.5px;box-sizing:border-box;border:1px solid #dcdcdc;"></div>
<div class="r" style="left:957px;top:111.5px;width:24.5px;height:3.0px;background:inherit;"></div>
<div class="t" style="left:958.00px;top:109.00px;font-size:8.6px;color:#1a1a1a;transform:scaleX(0.8357);">Trigger</div>
<div class="t" style="left:963.00px;top:119.00px;font-size:8.6px;color:#a0a0a0;transform:scaleX(0.8410);">Slope</div>
<div class="r" style="left:956px;top:128.5px;width:9px;height:9.0px;box-sizing:border-box;background:#fff;border:1px solid #cccccc;border-radius:50%;"></div>
<div class="r" style="left:958.5px;top:131.0px;width:4.0px;height:4.0px;background:#bbbbbb;border-radius:50%;"></div>
<div class="t" style="left:967.00px;top:129.00px;font-size:8.6px;color:#a0a0a0;transform:scaleX(0.8468);">Positive</div>
<div class="r" style="left:956px;top:139px;width:9px;height:9px;box-sizing:border-box;background:#fff;border:1px solid #cccccc;border-radius:50%;"></div>
<div class="t" style="left:967.00px;top:140.00px;font-size:8.6px;color:#a0a0a0;transform:scaleX(0.8544);">Negative</div>
<div class="t" style="left:958.00px;top:153.00px;font-size:6.8px;color:#a0a0a0;transform:scaleX(0.8057);">Delta Th %</div>
<div class="r" style="left:957.5px;top:159.5px;width:27.5px;height:14.0px;box-sizing:border-box;background:#f0f0f0;border:1px solid #c4c4c4;"></div>
<div class="t" style="left:960.00px;top:161.00px;font-size:9.4px;color:#a0a0a0;transform:scaleX(0.8129);">25</div>
<div class="r" style="left:985.5px;top:160px;width:9.0px;height:5.800000000000011px;box-sizing:border-box;background:#e9e9e9;border:1px solid #d4d4d4;"></div>
<div class="r" style="left:985.5px;top:167.2px;width:9.0px;height:5.800000000000011px;box-sizing:border-box;background:#e9e9e9;border:1px solid #d4d4d4;"></div>
<svg width="1024" height="550"><path d="M988.0 164 L990.0 162 L992.0 164 Z M988.0 169 L990.0 171 L992.0 169 Z" fill="#999" stroke="#999" stroke-width="0.6"/></svg>
<div class="r" style="left:951.5px;top:180.5px;width:9.0px;height:9.0px;box-sizing:border-box;background:#fff;border:1px solid #cccccc;"></div>
<div class="t" style="left:963.00px;top:182.00px;font-size:8.6px;color:#a0a0a0;transform:scaleX(0.8022);">D/A</div>
<div class="r" style="left:951.5px;top:190.7px;width:9.0px;height:9.0px;box-sizing:border-box;background:#fff;border:1px solid #cccccc;"></div>
<div class="t" style="left:963.00px;top:192.00px;font-size:8.6px;color:#a0a0a0;transform:scaleX(0.7673);">DCremoval</div>
<div class="r" style="left:951.5px;top:200.9px;width:9.0px;height:9.0px;box-sizing:border-box;background:#fff;border:1px solid #cccccc;"></div>
<div class="t" style="left:963.00px;top:202.00px;font-size:8.6px;color:#a0a0a0;transform:scaleX(0.8288);">Trig left</div>
<div class="r" style="left:951.5px;top:211.1px;width:9.0px;height:9.0px;box-sizing:border-box;background:#fff;border:1px solid #cccccc;"></div>
<div class="t" style="left:963.00px;top:212.00px;font-size:8.6px;color:#a0a0a0;transform:scaleX(0.8185);">Values</div>
<div class="r" style="left:926px;top:258px;width:11px;height:11px;box-sizing:border-box;background:#cccccc;border:1px solid #cfcfcf;"></div>
<div class="t" style="left:929.40px;top:260.00px;font-size:8.6px;color:#a0a0a0;transform:scaleX(0.8781);">0</div>
<div class="r" style="left:880px;top:292px;width:140px;height:210px;box-sizing:border-box;background:#fff;border:1px solid #d9d9d9;"></div>
<div class="r" style="left:881px;top:280px;width:27.5px;height:13px;box-sizing:border-box;background:#f0f0f0;border:1px solid #d9d9d9;border-bottom:none;"></div>
<div class="t" style="left:885.70px;top:283.00px;font-size:8.6px;color:#111;transform:scaleX(0.8261);">Main</div>
<div class="r" style="left:908.5px;top:280px;width:28.5px;height:13px;box-sizing:border-box;background:#f0f0f0;border:1px solid #d9d9d9;border-bottom:none;"></div>
<div class="t" style="left:913.50px;top:283.00px;font-size:8.6px;color:#111;transform:scaleX(0.8114);">More</div>
<div class="r" style="left:937px;top:280px;width:27.5px;height:13px;box-sizing:border-box;background:#f0f0f0;border:1px solid #d9d9d9;border-bottom:none;"></div>
<div class="t" style="left:941.70px;top:283.00px;font-size:8.6px;color:#111;transform:scaleX(0.8012);">Cepst</div>
<div class="r" style="left:994.5px;top:280px;width:25.5px;height:13px;box-sizing:border-box;background:#f0f0f0;border:1px solid #d9d9d9;border-bottom:none;"></div>
<div class="t" style="left:997.80px;top:283.00px;font-size:8.6px;color:#111;transform:scaleX(0.8056);">IMD</div>
<div class="r" style="left:964.5px;top:278.5px;width:30.0px;height:14.5px;box-sizing:border-box;background:#fff;border:1px solid #d9d9d9;border-bottom:none;"></div>
<div class="t" style="left:970.00px;top:281.00px;font-size:8.6px;color:#111;transform:scaleX(0.8034);">THD</div>
<div class="r" style="left:884.5px;top:301px;width:43.0px;height:33px;box-sizing:border-box;border:1px solid #dcdcdc;"></div>
<div class="r" style="left:889px;top:299px;width:26px;height:4px;background:#fff;"></div>
<div class="t" style="left:890.00px;top:297.00px;font-size:8.6px;color:#111;transform:scaleX(0.8440);">Source</div>
<div class="r" style="left:890px;top:308px;width:9px;height:9px;box-sizing:border-box;background:#fff;border:1px solid #cccccc;border-radius:50%;"></div>
<div class="t" style="left:900.00px;top:309.00px;font-size:8.6px;color:#a0a0a0;transform:scaleX(0.9413);">Int</div>
<div class="r" style="left:890px;top:320px;width:9px;height:9px;box-sizing:border-box;background:#fff;border:1px solid #cccccc;border-radius:50%;"></div>
<div class="r" style="left:892.5px;top:322.5px;width:4.0px;height:4.0px;background:#bbbbbb;border-radius:50%;"></div>
<div class="t" style="left:900.00px;top:321.00px;font-size:8.6px;color:#a0a0a0;transform:scaleX(0.8048);">Ext</div>
<div class="t" style="left:944.00px;top:302.00px;font-size:8.6px;color:#a8a8a8;transform:scaleX(0.8343);">Int. source frequency</div>
<div class="r" style="left:944px;top:312px;width:73px;height:14px;box-sizing:border-box;background:#cccccc;border:1px solid #c4c4c4;"></div>
<div class="t" style="left:947.00px;top:315.00px;font-size:8.6px;color:#999;transform:scaleX(0.7033);">996.09</div>
<svg width="1024" height="550"><path d="M1007.5 317.5 L1010 320 L1012.5 317.5" fill="none" stroke="#999" stroke-width="0.9"/></svg>
<div class="r" style="left:981px;top:330.5px;width:9px;height:9.0px;box-sizing:border-box;background:#fff;border:1px solid #333333;"></div>
<div class="t" style="left:992.00px;top:331.00px;font-size:8.6px;color:#111;transform:scaleX(0.8209);">+noise</div>
<div class="r" style="left:885px;top:338px;width:40px;height:16px;box-sizing:border-box;background:#e1e1e1;border:1px solid #adadad;"></div>
<div class="t" style="left:891.50px;top:342.00px;font-size:8.6px;color:#111;transform:scaleX(0.7845);">Calibrate</div>
<div class="r" style="left:931px;top:338px;width:40px;height:16px;box-sizing:border-box;background:#cce4f7;border:1px solid #3c8fd9;"></div>
<div class="t" style="left:937.25px;top:342.00px;font-size:8.6px;color:#111;transform:scaleX(0.8219);">Measure</div>
<div class="r" style="left:981px;top:342.5px;width:9px;height:9.0px;box-sizing:border-box;background:#fff;border:1px solid #cccccc;"></div>
<div class="t" style="left:992.00px;top:344.00px;font-size:8.6px;color:#b0b0b0;transform:scaleX(0.8478);">Auto</div>
<div class="r" style="left:981px;top:355px;width:9px;height:9px;box-sizing:border-box;background:#fff;border:1px solid #333333;"></div>
<div class="t" style="left:992.00px;top:357.00px;font-size:8.6px;color:#111;transform:scaleX(0.8367);">Mean</div>
<div class="t" style="left:885.00px;top:359.00px;font-size:8.6px;color:#111;transform:scaleX(0.8181);">Master output Level %</div>
<div class="r" style="left:887px;top:375.5px;width:93px;height:4.5px;box-sizing:border-box;background:#e7eaea;border:1px solid #d6d6d6;"></div>
<div class="r" style="left:889px;top:371.5px;width:1px;height:1.5px;background:#c4c4c4;"></div>
<div class="r" style="left:898px;top:371.5px;width:1px;height:1.5px;background:#c4c4c4;"></div>
<div class="r" style="left:906px;top:371.5px;width:1px;height:1.5px;background:#c4c4c4;"></div>
<div class="r" style="left:915px;top:371.5px;width:1px;height:1.5px;background:#c4c4c4;"></div>
<div class="r" style="left:924px;top:371.5px;width:1px;height:1.5px;background:#c4c4c4;"></div>
<div class="r" style="left:932px;top:371.5px;width:1px;height:1.5px;background:#c4c4c4;"></div>
<div class="r" style="left:941px;top:371.5px;width:1px;height:1.5px;background:#c4c4c4;"></div>
<div class="r" style="left:950px;top:371.5px;width:1px;height:1.5px;background:#c4c4c4;"></div>
<div class="r" style="left:959px;top:371.5px;width:1px;height:1.5px;background:#c4c4c4;"></div>
<div class="r" style="left:967px;top:371.5px;width:1px;height:1.5px;background:#c4c4c4;"></div>
<div class="r" style="left:976px;top:371.5px;width:1px;height:1.5px;background:#c4c4c4;"></div>
<div class="r" style="left:977px;top:374px;width:4px;height:7px;background:#0a7ad6;border-radius:0 0 2px 2px;"></div>
<div class="r" style="left:984px;top:369px;width:33px;height:13.5px;box-sizing:border-box;background:#fff;border:1px solid #7a7a7a;"></div>
<div class="t" style="left:987.00px;top:371.00px;font-size:9.4px;color:#111;transform:scaleX(0.7970);">100</div>
<div class="r" style="left:885px;top:385px;width:132px;height:11px;box-sizing:border-box;background:#e6e6e6;border:1px solid #bcbcbc;"></div>
<div class="r" style="left:886px;top:386px;width:81.29999999999995px;height:9px;background:#06b025;"></div>
<div class="r" style="left:885px;top:400px;width:131px;height:18px;box-sizing:border-box;background:#fff;border:1px solid #9a9a9a;border-top:2px solid #8a8a8a;border-left:2px solid #8a8a8a;overflow:hidden;"></div>
<div style="position:absolute;left:887px;top:402px;width:128px;height:15px;overflow:hidden;">
<div class="t" style="left:5.00px;top:2.00px;font-size:11.6px;color:#111;transform:scaleX(0.9443);">THD 0.0010% (1007.81Hz)</div>
</div>
<div class="r" style="left:885px;top:423.5px;width:28px;height:14.5px;box-sizing:border-box;background:#e1e1e1;border:1px solid #adadad;"></div>
<div class="t" style="left:892.75px;top:427.00px;font-size:8.6px;color:#111;transform:scaleX(0.8169);">Add</div>
<div class="r" style="left:915.5px;top:423.5px;width:27.5px;height:14.5px;box-sizing:border-box;background:#cccccc;border:1px solid #bfbfbf;"></div>
<div class="t" style="left:924.25px;top:427.00px;font-size:8.6px;color:#a0a0a0;transform:scaleX(0.7749);">Del</div>
<div class="r" style="left:945.3px;top:423.5px;width:27.90000000000009px;height:14.5px;box-sizing:border-box;background:#e1e1e1;border:1px solid #adadad;"></div>
<div class="t" style="left:951.75px;top:427.00px;font-size:8.6px;color:#111;transform:scaleX(0.8114);">View</div>
<div class="r" style="left:980.2px;top:423.5px;width:35.799999999999955px;height:14.5px;box-sizing:border-box;background:#e1e1e1;border:1px solid #adadad;"></div>
<div class="t" style="left:984.35px;top:427.00px;font-size:8.6px;color:#111;transform:scaleX(0.7775);">CalReset</div>
<div class="r" style="left:885px;top:443px;width:131.5px;height:51px;box-sizing:border-box;background:#fff;border:1px solid #c0c0c0;"></div>
<div class="r" style="left:886px;top:456px;width:130px;height:1px;background:#e4e4e4;"></div>
<div class="r" style="left:886px;top:469.5px;width:130px;height:1.0px;background:#e8e8e8;"></div>
<div class="r" style="left:947.5px;top:444px;width:1.0px;height:26px;background:#e4e4e4;"></div>
<div class="r" style="left:948.5px;top:457px;width:67.0px;height:12.5px;background:#99ccff;"></div>
<div class="t" style="left:888.00px;top:447.00px;font-size:8.6px;color:#111;transform:scaleX(0.8121);">Frequency</div>
<div class="t" style="left:950.00px;top:447.00px;font-size:8.6px;color:#111;transform:scaleX(0.7847);">Thd (%)</div>
<div class="t" style="left:891.20px;top:511.00px;font-size:23.5px;color:#e61e28;font-weight:bold;transform:scaleX(0.9631);">LME 49720</div>
</body></html>
